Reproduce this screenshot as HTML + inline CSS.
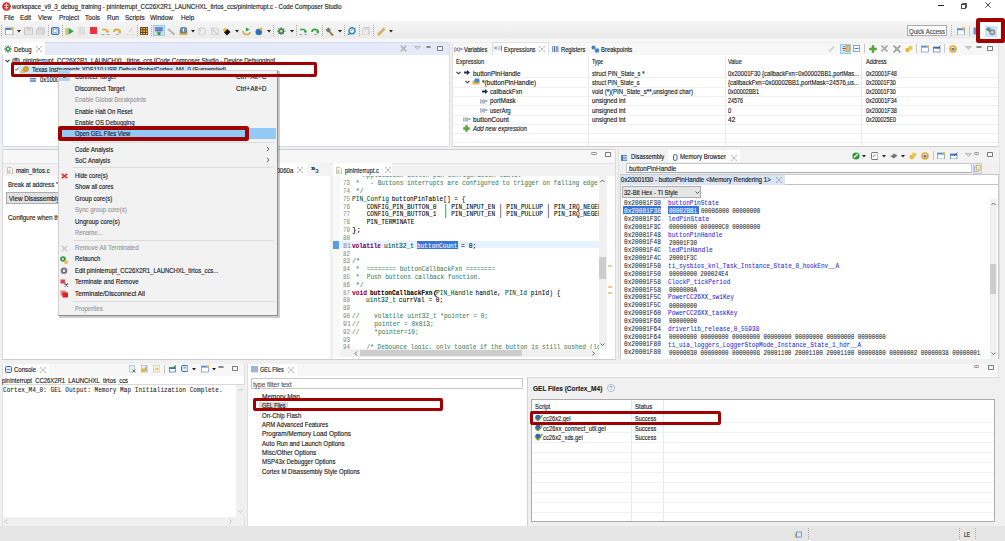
<!DOCTYPE html><html><head><meta charset="utf-8"><style>
*{margin:0;padding:0;box-sizing:border-box}
html,body{width:1005px;height:541px;overflow:hidden;background:#f0f0f0;position:relative}
div,svg{position:absolute}
.t{white-space:pre;transform-origin:0 0;-webkit-text-stroke:0.15px currentColor}
.tm{-webkit-text-stroke:0.08px currentColor}
</style></head><body>
<div style="left:0px;top:0px;width:1005px;height:21.3px;background:#fff"></div>
<svg style="position:absolute;left:1.5px;top:1.5px" width="9" height="9" viewBox="0 0 9 9"><circle cx="4.5" cy="4.5" r="4.3" fill="#d42a2a"/><path d="M2.2 3.2h4.6M4.5 1.5v6M2.5 5.8h4" stroke="#fff" stroke-width="0.8"/></svg>
<div class="t" style="left:12.10px;top:2.16px;line-height:9.0px;font-family:'Liberation Sans', sans-serif;font-size:7.5px;font-weight:normal;font-style:normal;color:#222;transform:scaleX(0.8093);">workspace_v9_3_debug_training - pinInterrupt_CC26X2R1_LAUNCHXL_tirtos_ccs/pinInterrupt.c - Code Composer Studio</div>
<div style="left:938px;top:5.2px;width:5.5px;height:0.9px;background:#222"></div>
<svg style="position:absolute;left:960.5px;top:3px" width="6" height="6" viewBox="0 0 6 6"><rect x="0.5" y="1.5" width="4" height="4" fill="none" stroke="#222" stroke-width="0.8"/><path d="M1.5 1.5V0.5H5.5V4.5H4.5" fill="none" stroke="#222" stroke-width="0.8"/></svg>
<svg style="position:absolute;left:985px;top:2.2px" width="6" height="6" viewBox="0 0 6 6"><path d="M0.3 0.3L5.7 5.7M5.7 0.3L0.3 5.7" stroke="#222" stroke-width="0.8"/></svg>
<div class="t" style="left:4.20px;top:12.90px;line-height:9.0px;font-family:'Liberation Sans', sans-serif;font-size:7.5px;font-weight:normal;font-style:normal;color:#1a1a1a;transform:scaleX(0.8600);">File</div>
<div class="t" style="left:20.30px;top:12.90px;line-height:9.0px;font-family:'Liberation Sans', sans-serif;font-size:7.5px;font-weight:normal;font-style:normal;color:#1a1a1a;transform:scaleX(0.8600);">Edit</div>
<div class="t" style="left:38.00px;top:12.90px;line-height:9.0px;font-family:'Liberation Sans', sans-serif;font-size:7.5px;font-weight:normal;font-style:normal;color:#1a1a1a;transform:scaleX(0.8600);">View</div>
<div class="t" style="left:58.50px;top:12.90px;line-height:9.0px;font-family:'Liberation Sans', sans-serif;font-size:7.5px;font-weight:normal;font-style:normal;color:#1a1a1a;transform:scaleX(0.8600);">Project</div>
<div class="t" style="left:85.20px;top:12.90px;line-height:9.0px;font-family:'Liberation Sans', sans-serif;font-size:7.5px;font-weight:normal;font-style:normal;color:#1a1a1a;transform:scaleX(0.8600);">Tools</div>
<div class="t" style="left:107.00px;top:12.90px;line-height:9.0px;font-family:'Liberation Sans', sans-serif;font-size:7.5px;font-weight:normal;font-style:normal;color:#1a1a1a;transform:scaleX(0.8600);">Run</div>
<div class="t" style="left:125.00px;top:12.90px;line-height:9.0px;font-family:'Liberation Sans', sans-serif;font-size:7.5px;font-weight:normal;font-style:normal;color:#1a1a1a;transform:scaleX(0.8600);">Scripts</div>
<div class="t" style="left:150.40px;top:12.90px;line-height:9.0px;font-family:'Liberation Sans', sans-serif;font-size:7.5px;font-weight:normal;font-style:normal;color:#1a1a1a;transform:scaleX(0.8600);">Window</div>
<div class="t" style="left:180.70px;top:12.90px;line-height:9.0px;font-family:'Liberation Sans', sans-serif;font-size:7.5px;font-weight:normal;font-style:normal;color:#1a1a1a;transform:scaleX(0.8600);">Help</div>
<div style="left:0px;top:21.3px;width:1005px;height:17.2px;background:linear-gradient(#f5f5f5,#ebebeb)"></div>
<div style="left:0px;top:38.5px;width:1005px;height:3px;background:#f7f7f7"></div>
<div style="left:907px;top:25px;width:40px;height:11px;background:#fff;border:1px solid #adadad"></div>
<div class="t" style="left:909.00px;top:26.70px;line-height:9.0px;font-family:'Liberation Sans', sans-serif;font-size:7.5px;font-weight:normal;font-style:normal;color:#444;transform:scaleX(0.8000);">Quick Access</div>
<div style="left:1.5px;top:41.5px;width:448px;height:105.5px;background:#fff;border:1px solid #d3dcef;border-radius:3px 3px 2px 2px"></div>
<div style="left:2.5px;top:42.5px;width:446px;height:12.5px;background:#e4eaf8"></div>
<div style="left:1.5px;top:41.5px;width:43.5px;height:13.5px;background:#fff;border-radius:2px 2px 0 0"></div>
<div class="t" style="left:13.90px;top:44.50px;line-height:9.0px;font-family:'Liberation Sans', sans-serif;font-size:7.5px;font-weight:normal;font-style:normal;color:#1a1a1a;transform:scaleX(0.7911);">Debug</div>
<svg style="position:absolute;left:36px;top:45.5px" width="6" height="6" viewBox="0 0 6 6"><path d="M1.5 1.5L4.5 4.5M4.5 1.5L1.5 4.5" stroke="#9a9a9a" stroke-width="0.7"/><path d="M0.3 1.5V0.3H1.5M4.5 0.3H5.7V1.5M5.7 4.5V5.7H4.5M1.5 5.7H0.3V4.5" fill="none" stroke="#9a9a9a" stroke-width="0.7"/></svg>
<div style="left:425.5px;top:45.8px;width:5.6px;height:2.4px;border:0.8px solid #8a8a8a;border-radius:1.2px;background:#fff"></div>
<div style="left:437.3px;top:45.5px;width:5.8px;height:5.2px;border:0.8px solid #7a7a7a;border-top:1.4px solid #7a7a7a;border-radius:0.8px;background:#fff"></div>
<svg style="position:absolute;left:414px;top:46px" width="7" height="4" viewBox="0 0 7 4"><path d="M0.5 0.5H6.5L3.5 3.3Z" fill="#d8d8d8" stroke="#a0a0a0" stroke-width="0.6"/></svg>
<svg style="left:399.5px;top:44.5px" width="7" height="7" viewBox="0 0 7 7"><path d="M0.8 0.8L6.2 6.2M6.2 0.8L0.8 6.2" stroke="#a8a8a8" stroke-width="1.4"/><circle cx="3.5" cy="3.5" r="1.6" fill="#b8b8b8"/></svg>
<div style="left:451.5px;top:41.5px;width:547.5px;height:105.0px;background:#fff;border:1px solid;border-color:#f0f0f0 #e0e0e0 #cdcdcd #e0e0e0;border-radius:2px 2px 0 0"></div>
<div style="left:452.5px;top:42.5px;width:545.5px;height:12.5px;background:#f7f7f7"></div>
<div style="left:492px;top:41.5px;width:56.5px;height:13.5px;background:#fff;border:1px solid #e0e0e0;border-bottom:none"></div>
<div class="t" style="left:464.00px;top:44.50px;line-height:9.0px;font-family:'Liberation Sans', sans-serif;font-size:7.5px;font-weight:normal;font-style:normal;color:#1a1a1a;transform:scaleX(0.7613);">Variables</div>
<div class="t" style="left:503.70px;top:44.50px;line-height:9.0px;font-family:'Liberation Sans', sans-serif;font-size:7.5px;font-weight:normal;font-style:normal;color:#1a1a1a;transform:scaleX(0.7708);">Expressions</div>
<svg style="position:absolute;left:539px;top:45.5px" width="6" height="6" viewBox="0 0 6 6"><path d="M1.5 1.5L4.5 4.5M4.5 1.5L1.5 4.5" stroke="#9a9a9a" stroke-width="0.7"/><path d="M0.3 1.5V0.3H1.5M4.5 0.3H5.7V1.5M5.7 4.5V5.7H4.5M1.5 5.7H0.3V4.5" fill="none" stroke="#9a9a9a" stroke-width="0.7"/></svg>
<div class="t" style="left:561.00px;top:44.50px;line-height:9.0px;font-family:'Liberation Sans', sans-serif;font-size:7.5px;font-weight:normal;font-style:normal;color:#1a1a1a;transform:scaleX(0.7689);">Registers</div>
<div class="t" style="left:601.20px;top:44.50px;line-height:9.0px;font-family:'Liberation Sans', sans-serif;font-size:7.5px;font-weight:normal;font-style:normal;color:#1a1a1a;transform:scaleX(0.7900);">Breakpoints</div>
<div style="left:976px;top:45.8px;width:5.6px;height:2.4px;border:0.8px solid #8a8a8a;border-radius:1.2px;background:#fff"></div>
<div style="left:987.3px;top:45.5px;width:5.8px;height:5.2px;border:0.8px solid #7a7a7a;border-top:1.4px solid #7a7a7a;border-radius:0.8px;background:#fff"></div>
<svg style="position:absolute;left:965px;top:46px" width="7" height="4" viewBox="0 0 7 4"><path d="M0.5 0.5H6.5L3.5 3.3Z" fill="#d8d8d8" stroke="#a0a0a0" stroke-width="0.6"/></svg>
<div class="t" style="left:454.00px;top:45.99px;line-height:6.6px;font-family:'Liberation Sans', sans-serif;font-size:5.5px;font-weight:normal;font-style:normal;color:#3a5a8a;transform:scaleX(0.9031);">(x)=</div>
<svg style="left:494px;top:45px" width="9" height="7" viewBox="0 0 9 7"><path d="M0.5 1.5L3 4.5M3 1.5L0.5 4.5" stroke="#4a6a9a" stroke-width="0.8"/><path d="M4 2H6.5M4 4H6.5" stroke="#4a6a9a" stroke-width="0.7"/><path d="M7.5 0.5V6.5" stroke="#2a9a3a" stroke-width="0.8"/></svg>
<svg style="left:551.5px;top:45.5px" width="7" height="6" viewBox="0 0 7 6"><path d="M0.8 0V6M2.5 0V6M4.2 0V6M5.9 0V6" stroke="#4a6a9a" stroke-width="0.9"/></svg>
<svg style="left:591.3px;top:44.8px" width="8.5" height="8" viewBox="0 0 8.5 8"><circle cx="2.5" cy="2.5" r="2" fill="#4a7ab8"/><circle cx="6" cy="5.5" r="2.3" fill="#3a8ac8"/></svg>
<div style="left:1px;top:25px;width:1px;height:11px;background:repeating-linear-gradient(to bottom,#b0a890 0 1px,transparent 1px 2px)"></div>
<svg style="left:5px;top:26.5px" width="9" height="8.5" viewBox="0 0 9 8.5"><rect x="0.5" y="1" width="7.5" height="7" fill="#fff8e0" stroke="#6a8fb8" stroke-width="0.7"/><rect x="0.5" y="1" width="7.5" height="2" fill="#4a86c8"/><circle cx="7.5" cy="1.5" r="1.5" fill="#e8b830"/></svg>
<svg style="left:17px;top:29.5px" width="4" height="3" viewBox="0 0 4 3"><path d="M0 0H4L2 2.5Z" fill="#222"/></svg>
<svg style="left:24px;top:26.5px" width="9" height="8.5" viewBox="0 0 9 8.5"><rect x="0.5" y="0.5" width="8" height="7.5" rx="1" fill="#e4e4e4" stroke="#bdbdbd" stroke-width="0.8"/><rect x="2.5" y="0.5" width="4" height="3" fill="#cfcfcf"/></svg>
<svg style="left:36px;top:26.5px" width="9" height="8.5" viewBox="0 0 9 8.5"><rect x="2" y="0.5" width="6.5" height="6.5" rx="1" fill="#e4e4e4" stroke="#c4c4c4" stroke-width="0.7"/><rect x="0.5" y="2" width="6.5" height="6.5" rx="1" fill="#dcdcdc" stroke="#bdbdbd" stroke-width="0.7"/></svg>
<div style="left:47.6px;top:25px;width:1px;height:11px;background:repeating-linear-gradient(to bottom,#b0a890 0 1px,transparent 1px 2px)"></div>
<svg style="left:51px;top:26.5px" width="8.5" height="8.5" viewBox="0 0 8.5 8.5"><rect x="0.6" y="0.6" width="7.3" height="6.8" rx="1.5" fill="#dfe9f7" stroke="#3a6fb8" stroke-width="1.2"/><rect x="2.5" y="2.3" width="3.5" height="3" fill="#fff" stroke="#5d85c0" stroke-width="0.5"/></svg>
<div style="left:61.8px;top:25px;width:1px;height:11px;background:repeating-linear-gradient(to bottom,#b0a890 0 1px,transparent 1px 2px)"></div>
<svg style="left:65px;top:26.5px" width="9" height="8.5" viewBox="0 0 9 8.5"><rect x="0.3" y="1" width="2.8" height="7" fill="#e0c060"/><path d="M3.5 0.8L8.8 4.3L3.5 7.8Z" fill="#3aa34a"/></svg>
<svg style="left:78px;top:26.5px" width="7" height="8" viewBox="0 0 7 8"><rect x="0.5" y="0.5" width="2.5" height="7" fill="#e3e3e3" stroke="#cfcfcf" stroke-width="0.5"/><rect x="4" y="0.5" width="2.5" height="7" fill="#e3e3e3" stroke="#cfcfcf" stroke-width="0.5"/></svg>
<svg style="left:90px;top:27.0px" width="7" height="7" viewBox="0 0 7 7"><rect x="0" y="0" width="7" height="7" fill="#e8323c"/></svg>
<svg style="left:101px;top:26.5px" width="9" height="8.5" viewBox="0 0 9 8.5"><path d="M1 2.5H5L7 5" fill="none" stroke="#d4a838" stroke-width="1.6"/><circle cx="6.5" cy="4.5" r="1.3" fill="#d4a838"/><path d="M0.5 8H3.5M5.5 8H8.5" stroke="#4060a0" stroke-width="1"/></svg>
<svg style="left:113px;top:26.5px" width="9" height="8.5" viewBox="0 0 9 8.5"><path d="M1 5C1 1.5 7 1.5 7 5" fill="none" stroke="#d4a838" stroke-width="1.7"/><circle cx="6.8" cy="5" r="1.4" fill="#d4a838"/><path d="M3 8H6" stroke="#4060a0" stroke-width="1"/></svg>
<svg style="left:125.7px;top:26.5px" width="8" height="8.5" viewBox="0 0 8 8.5"><path d="M6 1L3.5 5" stroke="#cfcfcf" stroke-width="1.3"/><path d="M0.5 8H2.5M5 8H7.5" stroke="#bcbcbc" stroke-width="1"/></svg>
<div style="left:136.6px;top:25px;width:1px;height:11px;background:repeating-linear-gradient(to bottom,#b0a890 0 1px,transparent 1px 2px)"></div>
<svg style="left:140px;top:26.5px" width="8" height="8" viewBox="0 0 8 8"><rect x="0" y="0" width="8" height="8" fill="#5a3a10"/><rect x="0.8" y="0.8" width="1.6" height="1.6" fill="#f0c060"/><rect x="0.8" y="3.3" width="1.6" height="1.6" fill="#f0c060"/><rect x="0.8" y="5.8" width="1.6" height="1.6" fill="#f0c060"/><rect x="3.3" y="0.8" width="1.6" height="1.6" fill="#f0c060"/><rect x="3.3" y="3.3" width="1.6" height="1.6" fill="#f0c060"/><rect x="3.3" y="5.8" width="1.6" height="1.6" fill="#f0c060"/><rect x="5.8" y="0.8" width="1.6" height="1.6" fill="#f0c060"/><rect x="5.8" y="3.3" width="1.6" height="1.6" fill="#f0c060"/><rect x="5.8" y="5.8" width="1.6" height="1.6" fill="#f0c060"/></svg>
<div style="left:151px;top:25px;width:1px;height:11px;background:repeating-linear-gradient(to bottom,#b0a890 0 1px,transparent 1px 2px)"></div>
<div style="left:153px;top:24.8px;width:11.5px;height:11px;background:#cce4f7;border:1px solid #99c9ef"></div>
<svg style="left:155px;top:26.5px" width="8" height="8.5" viewBox="0 0 8 8.5"><rect x="0.5" y="0.5" width="7" height="3.5" fill="#5d8ed8" stroke="#36a" stroke-width="0.4"/><rect x="1" y="4.5" width="6" height="1" fill="#d77"/><circle cx="4" cy="6.5" r="1.6" fill="#2a9a3a"/></svg>
<svg style="left:166.7px;top:26.5px" width="8.5" height="8.5" viewBox="0 0 8.5 8.5"><path d="M1 2L7.5 7.5" stroke="#b8b8b8" stroke-width="2.2"/></svg>
<svg style="left:178.8px;top:26.5px" width="9" height="8.5" viewBox="0 0 9 8.5"><path d="M0.5 3H8.5V8.5H0.5Z" fill="#e0b040"/><rect x="1.5" y="0.5" width="6" height="5.5" rx="1" fill="#6a90c8" stroke="#345" stroke-width="0.4"/><rect x="4" y="1.5" width="1" height="3" fill="#fff"/></svg>
<svg style="left:191px;top:29.5px" width="4" height="3" viewBox="0 0 4 3"><path d="M0 0H4L2 2.5Z" fill="#222"/></svg>
<svg style="left:197.4px;top:26.5px" width="9" height="8.5" viewBox="0 0 9 8.5"><circle cx="5" cy="4.5" r="3.5" fill="none" stroke="#d0d0d0" stroke-width="1.2"/><path d="M1 1L4 4" stroke="#ccc" stroke-width="1.2"/></svg>
<svg style="left:210.4px;top:26.5px" width="9" height="8.5" viewBox="0 0 9 8.5"><circle cx="5" cy="4.5" r="3.5" fill="none" stroke="#d0d0d0" stroke-width="1.2"/><path d="M1 1L8 8" stroke="#ccc" stroke-width="1.2"/></svg>
<svg style="left:222px;top:26.5px" width="9" height="9" viewBox="0 0 9 9"><path d="M0.5 3L3 0.5L5 2.5L2.5 5Z" fill="#e8b830"/><path d="M2 5.5L5.5 2L8.5 5L5 8.5Z" fill="#111"/></svg>
<svg style="left:235px;top:29.5px" width="4" height="3" viewBox="0 0 4 3"><path d="M0 0H4L2 2.5Z" fill="#222"/></svg>
<svg style="left:242px;top:26.5px" width="9" height="9" viewBox="0 0 9 9"><path d="M1 4C1 8.5 8 8.5 8 5" fill="none" stroke="#d8a838" stroke-width="1.6"/><path d="M4 0.5L7.5 2.5L4 4.5Z" fill="#2a9a3a"/></svg>
<svg style="left:254.7px;top:26.5px" width="8" height="8.5" viewBox="0 0 8 8.5"><circle cx="3.8" cy="5" r="3.3" fill="#2f72c0"/><circle cx="6" cy="2" r="1.5" fill="#e8b830"/></svg>
<svg style="left:267px;top:29.5px" width="4" height="3" viewBox="0 0 4 3"><path d="M0 0H4L2 2.5Z" fill="#222"/></svg>
<div style="left:273.3px;top:25px;width:1px;height:11px;background:repeating-linear-gradient(to bottom,#b0a890 0 1px,transparent 1px 2px)"></div>
<svg style="left:277px;top:26.5px" width="8.5" height="8.5" viewBox="0 0 8.5 8.5"><circle cx="4.2" cy="4.2" r="3" fill="#3a7a6a"/><path d="M4.2 0V8.5M0 4.2H8.5M1.2 1.2L7.2 7.2M7.2 1.2L1.2 7.2" stroke="#3a7a6a" stroke-width="0.8"/><circle cx="4.2" cy="4.2" r="1.4" fill="#c8e070"/></svg>
<svg style="left:289.5px;top:29.5px" width="4" height="3" viewBox="0 0 4 3"><path d="M0 0H4L2 2.5Z" fill="#222"/></svg>
<div style="left:295.7px;top:25px;width:1px;height:11px;background:repeating-linear-gradient(to bottom,#b0a890 0 1px,transparent 1px 2px)"></div>
<svg style="left:299px;top:26.5px" width="8.5" height="8.5" viewBox="0 0 8.5 8.5"><path d="M1 2.5H5L7 5" fill="none" stroke="#3aa34a" stroke-width="1.6"/><circle cx="6.5" cy="4.5" r="1.3" fill="#3aa34a"/><path d="M0.5 8H3M5.5 8H8" stroke="#4060a0" stroke-width="1"/></svg>
<svg style="left:311px;top:26.5px" width="8.5" height="8.5" viewBox="0 0 8.5 8.5"><path d="M1 5C1 1.5 7 1.5 7 5" fill="none" stroke="#3aa34a" stroke-width="1.7"/><circle cx="6.8" cy="5" r="1.4" fill="#3aa34a"/><path d="M3 8H6" stroke="#4060a0" stroke-width="1"/></svg>
<div style="left:321.9px;top:25px;width:1px;height:11px;background:repeating-linear-gradient(to bottom,#b0a890 0 1px,transparent 1px 2px)"></div>
<svg style="left:325px;top:26.5px" width="9" height="9" viewBox="0 0 9 9"><path d="M4 4L8 8.5" stroke="#a06a30" stroke-width="1.8"/><path d="M0.5 3L3.5 0.5L6 3L3 5.5Z" fill="#777"/></svg>
<svg style="left:337.5px;top:29.5px" width="4" height="3" viewBox="0 0 4 3"><path d="M0 0H4L2 2.5Z" fill="#222"/></svg>
<div style="left:343.8px;top:25px;width:1px;height:11px;background:repeating-linear-gradient(to bottom,#b0a890 0 1px,transparent 1px 2px)"></div>
<svg style="left:347px;top:26.5px" width="8.5" height="8.5" viewBox="0 0 8.5 8.5"><circle cx="5" cy="3.8" r="3" fill="none" stroke="#2a8ab8" stroke-width="1.4"/><path d="M3 6L0.8 8.2" stroke="#2a8ab8" stroke-width="1.5"/><path d="M3.8 3.8L5.5 2.5" stroke="#2a8ab8" stroke-width="0.9"/></svg>
<div style="left:358.5px;top:25px;width:1px;height:11px;background:repeating-linear-gradient(to bottom,#b0a890 0 1px,transparent 1px 2px)"></div>
<svg style="left:361.8px;top:26.5px" width="8.5" height="8.5" viewBox="0 0 8.5 8.5"><rect x="1.5" y="0.5" width="6.5" height="6.5" rx="1" fill="#e6e6e6" stroke="#c0c0c0" stroke-width="0.7"/><rect x="0.5" y="2" width="6" height="6" rx="1" fill="#ececec" stroke="#c8c8c8" stroke-width="0.7"/></svg>
<div style="left:373.3px;top:25px;width:1px;height:11px;background:repeating-linear-gradient(to bottom,#b0a890 0 1px,transparent 1px 2px)"></div>
<svg style="left:376.6px;top:26.5px" width="9" height="9" viewBox="0 0 9 9"><path d="M1 8L7.5 1.5" stroke="#e8b040" stroke-width="2.8"/><path d="M2.5 6.5L6 3" stroke="#b0b0c8" stroke-width="1.3"/></svg>
<svg style="left:389px;top:29.5px" width="4" height="3" viewBox="0 0 4 3"><path d="M0 0H4L2 2.5Z" fill="#222"/></svg>
<div style="left:950.5px;top:25px;width:1px;height:12px;background:repeating-linear-gradient(to bottom,#b0a890 0 1px,transparent 1px 2px)"></div>
<svg style="left:957px;top:26.5px" width="8" height="8.5" viewBox="0 0 8 8.5"><rect x="0.5" y="1.5" width="7" height="6.5" fill="#fff" stroke="#6a90c0" stroke-width="0.7"/><rect x="0.5" y="1.5" width="7" height="1.8" fill="#5d8ed8"/><circle cx="6.5" cy="1.5" r="1.4" fill="#e8b830"/></svg>
<div style="left:969px;top:26px;width:1px;height:10px;background:#c8c8c8"></div>
<svg style="left:973px;top:26.5px" width="8" height="8.5" viewBox="0 0 8 8.5"><rect x="0.5" y="0.5" width="7" height="7" rx="1" fill="#5d8ed8"/><circle cx="5" cy="5" r="2.6" fill="#999"/></svg>
<div style="left:980px;top:22.5px;width:20px;height:16.5px;background:#fff"></div>
<div style="left:984.5px;top:25.5px;width:12.5px;height:11px;background:#cce4f7"></div>
<svg style="left:986px;top:27.0px" width="10" height="9" viewBox="0 0 10 9"><path d="M0.5 1.5L4.5 4.5" stroke="#2a9a3a" stroke-width="2"/><rect x="1" y="0.5" width="3.5" height="2.5" fill="#5d8ed8"/><circle cx="6.3" cy="5.3" r="3" fill="#8a8a8a"/><circle cx="6.3" cy="5.3" r="1.5" fill="#d0d0d0"/></svg>
<svg style="left:3.9px;top:44.8px" width="8" height="8" viewBox="0 0 8 8"><circle cx="4" cy="4" r="2.6" fill="#3a8a5a"/><path d="M4 0V8M0 4H8M1.2 1.2L6.8 6.8M6.8 1.2L1.2 6.8" stroke="#3a8a5a" stroke-width="0.9"/><circle cx="4" cy="4" r="1.2" fill="#d8f0a0"/></svg>
<svg style="left:5.3px;top:59px" width="5" height="4" viewBox="0 0 5 4"><path d="M0.5 0.8L2.5 2.8L4.5 0.8" fill="none" stroke="#333" stroke-width="1.1"/></svg>
<svg style="left:12px;top:57px" width="8" height="7" viewBox="0 0 8 7"><rect x="0.5" y="1.5" width="7" height="5" rx="1.5" fill="#aaa" stroke="#666" stroke-width="0.6"/><circle cx="4" cy="2" r="1.6" fill="#666"/></svg>
<div class="t" style="left:23.00px;top:55.50px;line-height:9.0px;font-family:'Liberation Sans', sans-serif;font-size:7.5px;font-weight:normal;font-style:normal;color:#1a1a1a;transform:scaleX(0.8077);">pinInterrupt_CC26X2R1_LAUNCHXL_tirtos_ccs [Code Composer Studio - Device Debugging]</div>
<div style="left:19.3px;top:65.5px;width:207px;height:8px;background:#cde8ff"></div>
<svg style="left:15px;top:67px" width="4" height="4" viewBox="0 0 4 4"><path d="M0.3 2L1.5 3.3L3.5 0.5" fill="none" stroke="#333" stroke-width="0.8"/></svg>
<svg style="left:21px;top:66px" width="8" height="7" viewBox="0 0 8 7"><rect x="0" y="3" width="4" height="4" fill="#e8c048"/><circle cx="5" cy="3" r="2.6" fill="#e0a030" stroke="#a87018" stroke-width="0.5"/></svg>
<div class="t" style="left:31.60px;top:65.10px;line-height:9.0px;font-family:'Liberation Sans', sans-serif;font-size:7.5px;font-weight:normal;font-style:normal;color:#1a1a1a;transform:scaleX(0.7886);">Texas Instruments XDS110 USB Debug Probe/Cortex_M4_0 (Suspended)</div>
<svg style="left:30px;top:77.6px" width="6" height="4.5" viewBox="0 0 6 4.5"><path d="M0 0.6H6M0 2.2H6M0 3.8H6" stroke="#3a6fc0" stroke-width="1"/></svg>
<div class="t" style="left:40.00px;top:74.80px;line-height:9.0px;font-family:'Liberation Sans', sans-serif;font-size:7.5px;font-weight:normal;font-style:normal;color:#1a1a1a;transform:scaleX(0.7812);">0x1000060a  (no symbols are defined)</div>
<div style="left:588.2px;top:56px;width:1px;height:90px;background:#e8e8e8"></div>
<div style="left:725.2px;top:56px;width:1px;height:90px;background:#e8e8e8"></div>
<div style="left:861.2px;top:56px;width:1px;height:90px;background:#e8e8e8"></div>
<div class="t" style="left:455.90px;top:57.30px;line-height:9.0px;font-family:'Liberation Sans', sans-serif;font-size:7.5px;font-weight:normal;font-style:normal;color:#1a1a1a;transform:scaleX(0.7568);">Expression</div>
<div class="t" style="left:592.20px;top:57.30px;line-height:9.0px;font-family:'Liberation Sans', sans-serif;font-size:7.5px;font-weight:normal;font-style:normal;color:#1a1a1a;transform:scaleX(0.6888);">Type</div>
<div class="t" style="left:728.30px;top:57.30px;line-height:9.0px;font-family:'Liberation Sans', sans-serif;font-size:7.5px;font-weight:normal;font-style:normal;color:#1a1a1a;transform:scaleX(0.7379);">Value</div>
<div class="t" style="left:865.50px;top:57.30px;line-height:9.0px;font-family:'Liberation Sans', sans-serif;font-size:7.5px;font-weight:normal;font-style:normal;color:#1a1a1a;transform:scaleX(0.7504);">Address</div>
<div style="left:452.5px;top:77.4px;width:545.5px;height:0.8px;background:#f0f0f0"></div>
<div style="left:452.5px;top:86.7px;width:545.5px;height:0.8px;background:#f0f0f0"></div>
<div style="left:452.5px;top:96px;width:545.5px;height:0.8px;background:#f0f0f0"></div>
<div style="left:452.5px;top:105.3px;width:545.5px;height:0.8px;background:#f0f0f0"></div>
<div style="left:452.5px;top:114.5px;width:545.5px;height:0.8px;background:#f0f0f0"></div>
<div style="left:452.5px;top:123.8px;width:545.5px;height:0.8px;background:#f0f0f0"></div>
<div style="left:452.5px;top:133.1px;width:545.5px;height:0.8px;background:#f0f0f0"></div>
<div style="left:452.5px;top:142.3px;width:545.5px;height:0.8px;background:#f0f0f0"></div>
<svg style="left:456.3px;top:71px" width="5" height="4" viewBox="0 0 5 4"><path d="M0.5 0.8L2.5 2.8L4.5 0.8" fill="none" stroke="#333" stroke-width="1.1"/></svg>
<svg style="left:464px;top:70px" width="6" height="5" viewBox="0 0 6 5"><path d="M0 1.5H3V0L6 2.5L3 5V3.5H0Z" fill="#1a2a6a"/></svg>
<div class="t" style="left:473.30px;top:68.50px;line-height:9.0px;font-family:'Liberation Sans', sans-serif;font-size:7.5px;font-weight:normal;font-style:normal;color:#1a1a1a;transform:scaleX(0.8582);">buttonPinHandle</div>
<svg style="left:464.6px;top:80.2px" width="5" height="4" viewBox="0 0 5 4"><path d="M0.5 0.8L2.5 2.8L4.5 0.8" fill="none" stroke="#333" stroke-width="1.1"/></svg>
<svg style="left:471.5px;top:78px" width="9" height="7" viewBox="0 0 9 7"><path d="M0.5 2.5H7.5V6.5H0.5Z" fill="#e8b040"/><rect x="2.5" y="0.5" width="5" height="4" rx="1.2" fill="#4a8ad0"/></svg>
<div class="t" style="left:481.70px;top:77.80px;line-height:9.0px;font-family:'Liberation Sans', sans-serif;font-size:7.5px;font-weight:normal;font-style:normal;color:#1a1a1a;transform:scaleX(0.8532);">*(buttonPinHandle)</div>
<svg style="left:482px;top:89px" width="6" height="5" viewBox="0 0 6 5"><path d="M0 1.5H3V0L6 2.5L3 5V3.5H0Z" fill="#1a2a6a"/></svg>
<div class="t" style="left:490.10px;top:87.10px;line-height:9.0px;font-family:'Liberation Sans', sans-serif;font-size:7.5px;font-weight:normal;font-style:normal;color:#1a1a1a;transform:scaleX(0.8104);">callbackFxn</div>
<div class="t" style="left:479.50px;top:97.79px;line-height:6.6px;font-family:'Liberation Sans', sans-serif;font-size:5.5px;font-weight:normal;font-style:normal;color:#3a5a8a;transform:scaleX(0.7613);">(x)=</div>
<div class="t" style="left:490.10px;top:96.40px;line-height:9.0px;font-family:'Liberation Sans', sans-serif;font-size:7.5px;font-weight:normal;font-style:normal;color:#1a1a1a;transform:scaleX(0.8323);">portMask</div>
<div class="t" style="left:479.50px;top:107.09px;line-height:6.6px;font-family:'Liberation Sans', sans-serif;font-size:5.5px;font-weight:normal;font-style:normal;color:#3a5a8a;transform:scaleX(0.7613);">(x)=</div>
<div class="t" style="left:490.10px;top:105.70px;line-height:9.0px;font-family:'Liberation Sans', sans-serif;font-size:7.5px;font-weight:normal;font-style:normal;color:#1a1a1a;transform:scaleX(0.7848);">userArg</div>
<div class="t" style="left:463.00px;top:116.29px;line-height:6.6px;font-family:'Liberation Sans', sans-serif;font-size:5.5px;font-weight:normal;font-style:normal;color:#3a5a8a;transform:scaleX(0.7613);">(x)=</div>
<div class="t" style="left:473.30px;top:114.90px;line-height:9.0px;font-family:'Liberation Sans', sans-serif;font-size:7.5px;font-weight:normal;font-style:normal;color:#1a1a1a;transform:scaleX(0.8780);">buttonCount</div>
<svg style="left:463px;top:124.5px" width="7" height="7" viewBox="0 0 7 7"><path d="M2.5 0.5H4.5V2.5H6.5V4.5H4.5V6.5H2.5V4.5H0.5V2.5H2.5Z" fill="#5aaa30" stroke="#3a8a20" stroke-width="0.4"/></svg>
<div class="t" style="left:473.30px;top:124.20px;line-height:9.0px;font-family:'Liberation Sans', sans-serif;font-size:7.5px;font-weight:normal;font-style:italic;color:#1a1a1a;transform:scaleX(0.7971);">Add new expression</div>
<div class="t" style="left:591.80px;top:68.50px;line-height:9.0px;font-family:'Liberation Sans', sans-serif;font-size:7.5px;font-weight:normal;font-style:normal;color:#1a1a1a;transform:scaleX(0.7762);">struct PIN_State_s *</div>
<div class="t" style="left:591.80px;top:77.80px;line-height:9.0px;font-family:'Liberation Sans', sans-serif;font-size:7.5px;font-weight:normal;font-style:normal;color:#1a1a1a;transform:scaleX(0.7619);">struct PIN_State_s</div>
<div class="t" style="left:591.80px;top:87.10px;line-height:9.0px;font-family:'Liberation Sans', sans-serif;font-size:7.5px;font-weight:normal;font-style:normal;color:#1a1a1a;transform:scaleX(0.8016);">void (*)(PIN_State_s**,unsigned char)</div>
<div class="t" style="left:591.80px;top:96.40px;line-height:9.0px;font-family:'Liberation Sans', sans-serif;font-size:7.5px;font-weight:normal;font-style:normal;color:#1a1a1a;transform:scaleX(0.8293);">unsigned int</div>
<div class="t" style="left:591.80px;top:105.70px;line-height:9.0px;font-family:'Liberation Sans', sans-serif;font-size:7.5px;font-weight:normal;font-style:normal;color:#1a1a1a;transform:scaleX(0.8293);">unsigned int</div>
<div class="t" style="left:591.80px;top:114.90px;line-height:9.0px;font-family:'Liberation Sans', sans-serif;font-size:7.5px;font-weight:normal;font-style:normal;color:#1a1a1a;transform:scaleX(0.8293);">unsigned int</div>
<div class="t" style="left:728.30px;top:68.50px;line-height:9.0px;font-family:'Liberation Sans', sans-serif;font-size:7.5px;font-weight:normal;font-style:normal;color:#1a1a1a;transform:scaleX(0.7774);">0x20001F30 {callbackFxn=0x00002BB1,portMas...</div>
<div class="t" style="left:728.30px;top:77.80px;line-height:9.0px;font-family:'Liberation Sans', sans-serif;font-size:7.5px;font-weight:normal;font-style:normal;color:#1a1a1a;transform:scaleX(0.7988);">{callbackFxn=0x00002BB1,portMask=24576,us...</div>
<div class="t" style="left:728.30px;top:87.10px;line-height:9.0px;font-family:'Liberation Sans', sans-serif;font-size:7.5px;font-weight:normal;font-style:normal;color:#1a1a1a;transform:scaleX(0.7209);">0x00002BB1</div>
<div class="t" style="left:728.30px;top:96.40px;line-height:9.0px;font-family:'Liberation Sans', sans-serif;font-size:7.5px;font-weight:normal;font-style:normal;color:#1a1a1a;transform:scaleX(0.7143);">24576</div>
<div class="t" style="left:728.30px;top:105.70px;line-height:9.0px;font-family:'Liberation Sans', sans-serif;font-size:7.5px;font-weight:normal;font-style:normal;color:#1a1a1a;transform:scaleX(0.7656);">0</div>
<div class="t" style="left:728.30px;top:114.90px;line-height:9.0px;font-family:'Liberation Sans', sans-serif;font-size:7.5px;font-weight:normal;font-style:normal;color:#1a1a1a;transform:scaleX(0.8750);">42</div>
<div class="t" style="left:865.50px;top:68.50px;line-height:9.0px;font-family:'Liberation Sans', sans-serif;font-size:7.5px;font-weight:normal;font-style:normal;color:#1a1a1a;transform:scaleX(0.7383);">0x20001F48</div>
<div class="t" style="left:865.50px;top:77.80px;line-height:9.0px;font-family:'Liberation Sans', sans-serif;font-size:7.5px;font-weight:normal;font-style:normal;color:#1a1a1a;transform:scaleX(0.7145);">0x20001F30</div>
<div class="t" style="left:865.50px;top:87.10px;line-height:9.0px;font-family:'Liberation Sans', sans-serif;font-size:7.5px;font-weight:normal;font-style:normal;color:#1a1a1a;transform:scaleX(0.7145);">0x20001F30</div>
<div class="t" style="left:865.50px;top:96.40px;line-height:9.0px;font-family:'Liberation Sans', sans-serif;font-size:7.5px;font-weight:normal;font-style:normal;color:#1a1a1a;transform:scaleX(0.7383);">0x20001F34</div>
<div class="t" style="left:865.50px;top:105.70px;line-height:9.0px;font-family:'Liberation Sans', sans-serif;font-size:7.5px;font-weight:normal;font-style:normal;color:#1a1a1a;transform:scaleX(0.7383);">0x20001F38</div>
<div class="t" style="left:865.50px;top:114.90px;line-height:9.0px;font-family:'Liberation Sans', sans-serif;font-size:7.5px;font-weight:normal;font-style:normal;color:#1a1a1a;transform:scaleX(0.7145);">0x200025E0</div>
<svg style="left:828px;top:45px" width="7" height="7" viewBox="0 0 7 7"><path d="M1 6.5L6 1.5" stroke="#c8c8c8" stroke-width="1.5"/><rect x="0.5" y="4" width="3" height="3" fill="#ddd"/></svg>
<div style="left:840px;top:43.5px;width:11px;height:10.5px;background:#cce4f7;border:1px solid #99c9ef"></div>
<svg style="left:841.5px;top:45px" width="8" height="7" viewBox="0 0 8 7"><path d="M0.5 3.5H4" stroke="#c04040" stroke-width="1"/><rect x="4" y="0.5" width="3.5" height="6" fill="#f0c060" stroke="#a08030" stroke-width="0.5"/><path d="M1 1.5H3M1 5.5H3" stroke="#4a7ac0" stroke-width="0.8"/></svg>
<svg style="left:853px;top:45px" width="7" height="7" viewBox="0 0 7 7"><rect x="0.5" y="0.5" width="6" height="6" fill="#fff" stroke="#6a90c0" stroke-width="0.8"/><path d="M1.5 3.5H5.5" stroke="#3a6ab0" stroke-width="0.9"/></svg>
<div style="left:863.7px;top:44px;width:1px;height:9px;background:#c8c8c8"></div>
<svg style="left:868.5px;top:45px" width="8" height="8" viewBox="0 0 8 8"><path d="M3 0.5H5V3H7.5V5H5V7.5H3V5H0.5V3H3Z" fill="#5aaa30" stroke="#3a8a20" stroke-width="0.4"/></svg>
<svg style="left:881px;top:45px" width="7" height="7" viewBox="0 0 7 7"><path d="M0.5 0.5L6.5 6.5M6.5 0.5L0.5 6.5" stroke="#a8a8a8" stroke-width="1.6"/></svg>
<svg style="left:892.5px;top:44.5px" width="8" height="8" viewBox="0 0 8 8"><path d="M0.5 0.5L7.5 7.5M7.5 0.5L0.5 7.5" stroke="#8a8a8a" stroke-width="1.4"/><circle cx="4" cy="4" r="2" fill="#aaa"/></svg>
<svg style="left:905px;top:44.5px" width="8" height="8" viewBox="0 0 8 8"><circle cx="2.5" cy="5" r="2.2" fill="#e8b830"/><circle cx="5.5" cy="3" r="2.2" fill="#f0c850"/></svg>
<div style="left:916px;top:44px;width:1px;height:9px;background:#c8c8c8"></div>
<svg style="left:920.5px;top:45px" width="8" height="7.5" viewBox="0 0 8 7.5"><rect x="0.5" y="1" width="7" height="6" fill="#fff" stroke="#6a90c0" stroke-width="0.7"/><rect x="0.5" y="1" width="7" height="1.6" fill="#5d8ed8"/><circle cx="7" cy="1.5" r="1.3" fill="#e8b830"/></svg>
<svg style="left:932.5px;top:45px" width="8" height="7.5" viewBox="0 0 8 7.5"><rect x="0.5" y="2" width="6.5" height="5" fill="#fff" stroke="#4a7ac0" stroke-width="0.7"/><rect x="0.5" y="2" width="6.5" height="1.6" fill="#3a6ab0"/><path d="M4 4L7.5 0.5" stroke="#555" stroke-width="0.8"/></svg>
<div style="left:944px;top:44px;width:1px;height:9px;background:#c8c8c8"></div>
<svg style="left:948.5px;top:44.5px" width="8" height="8" viewBox="0 0 8 8"><circle cx="4" cy="4" r="3" fill="none" stroke="#e0a830" stroke-width="1.6"/><rect x="2.5" y="3" width="3" height="2.5" fill="#777"/></svg>
<div style="left:1.5px;top:148.5px;width:614.5px;height:211px;background:#fff;border:1px solid;border-color:#cfcfcf #dadada #cdcdcd #dadada;border-top-width:1.3px;border-radius:2px 2px 0 0"></div>
<div style="left:2.5px;top:149.8px;width:612.5px;height:13.2px;background:#f7f7f7"></div>
<div style="left:2.5px;top:163px;width:612.5px;height:12.8px;background:#f2f2f2;border-top:0.8px solid #e4e4e4"></div>
<div style="left:591px;top:152.3px;width:5.6px;height:2.4px;border:0.8px solid #8a8a8a;border-radius:1.2px;background:#fff"></div>
<div style="left:605.3px;top:152.0px;width:5.8px;height:5.2px;border:0.8px solid #7a7a7a;border-top:1.4px solid #7a7a7a;border-radius:0.8px;background:#fff"></div>
<svg style="left:6.6px;top:166.5px" width="6" height="7.5" viewBox="0 0 6 7.5"><path d="M0.5 0.5H4L5.5 2V7H0.5Z" fill="#fff" stroke="#b8a060" stroke-width="0.6"/><text x="1.3" y="5.8" font-size="4.5" fill="#3a6ab0" font-family="Liberation Sans">c</text></svg>
<div class="t" style="left:15.80px;top:165.90px;line-height:9.0px;font-family:'Liberation Sans', sans-serif;font-size:7.5px;font-weight:normal;font-style:normal;color:#1a1a1a;transform:scaleX(0.7909);">main_tirtos.c</div>
<div style="left:58px;top:163px;width:248.8px;height:12.8px;background:#fff"></div>
<div class="t" style="left:260.00px;top:165.90px;line-height:9.0px;font-family:'Liberation Sans', sans-serif;font-size:7.5px;font-weight:normal;font-style:normal;color:#1a1a1a;transform:scaleX(0.8051);">0x1000060a</div>
<svg style="position:absolute;left:297px;top:166.5px" width="6" height="6" viewBox="0 0 6 6"><path d="M1.5 1.5L4.5 4.5M4.5 1.5L1.5 4.5" stroke="#9a9a9a" stroke-width="0.7"/><path d="M0.3 1.5V0.3H1.5M4.5 0.3H5.7V1.5M5.7 4.5V5.7H4.5M1.5 5.7H0.3V4.5" fill="none" stroke="#9a9a9a" stroke-width="0.7"/></svg>
<div style="left:306.8px;top:163px;width:22.2px;height:12.8px;background:#f3f3f3"></div>
<div class="t" style="left:311.30px;top:163.80px;line-height:9.0px;font-family:'Liberation Sans', sans-serif;font-size:7.5px;font-weight:bold;font-style:normal;color:#111;transform:scaleX(1.0125);">»</div>
<div class="t" style="left:315.20px;top:168.22px;line-height:7.2px;font-family:'Liberation Sans', sans-serif;font-size:6px;font-weight:normal;font-style:normal;color:#333;">3</div>
<div class="t" style="left:7.80px;top:179.80px;line-height:9.0px;font-family:'Liberation Sans', sans-serif;font-size:7.5px;font-weight:normal;font-style:normal;color:#1a1a1a;transform:scaleX(0.8150);">Break at address &quot;0x1000060a&quot; with no debug information available.</div>
<div style="left:6.3px;top:192.4px;width:120px;height:11.6px;background:#e1e1e1;border:1px solid #adadad"></div>
<div class="t" style="left:9.20px;top:194.30px;line-height:9.0px;font-family:'Liberation Sans', sans-serif;font-size:7.5px;font-weight:normal;font-style:normal;color:#1a1a1a;transform:scaleX(0.8333);">View Disassembly...</div>
<div class="t" style="left:7.80px;top:213.30px;line-height:9.0px;font-family:'Liberation Sans', sans-serif;font-size:7.5px;font-weight:normal;font-style:normal;color:#1a1a1a;transform:scaleX(0.8475);">Configure when this editor is shown</div>
<div style="left:329.5px;top:175.8px;width:3px;height:183px;background:#f0f0f0"></div>
<div style="left:332.7px;top:163px;width:59.5px;height:12.8px;background:#fff"></div>
<svg style="left:336px;top:166.5px" width="6" height="7.5" viewBox="0 0 6 7.5"><path d="M0.5 0.5H4L5.5 2V7H0.5Z" fill="#fff" stroke="#b8a060" stroke-width="0.6"/><text x="1.3" y="5.8" font-size="4.5" fill="#3a6ab0" font-family="Liberation Sans">c</text></svg>
<div class="t" style="left:344.60px;top:165.90px;line-height:9.0px;font-family:'Liberation Sans', sans-serif;font-size:7.5px;font-weight:normal;font-style:normal;color:#1a1a1a;transform:scaleX(0.7729);">pinInterrupt.c</div>
<svg style="position:absolute;left:384.5px;top:166.5px" width="6" height="6" viewBox="0 0 6 6"><path d="M1.5 1.5L4.5 4.5M4.5 1.5L1.5 4.5" stroke="#9a9a9a" stroke-width="0.7"/><path d="M0.3 1.5V0.3H1.5M4.5 0.3H5.7V1.5M5.7 4.5V5.7H4.5M1.5 5.7H0.3V4.5" fill="none" stroke="#9a9a9a" stroke-width="0.7"/></svg>
<div style="left:332.5px;top:175.8px;width:7px;height:181px;background:#f8f8f8"></div>
<div style="left:340px;top:241px;width:258.6px;height:7.2px;background:#e8f2fe"></div>
<div style="left:333px;top:240.5px;width:5.5px;height:8px;background:#5a9ae0"></div>
<div style="left:340px;top:175.8px;width:258.6px;height:173.6px;overflow:hidden">
<div class="t tm" style="left:11.60px;top:-4.48px;line-height:8.395px;font-family:'Liberation Mono', monospace;font-size:6.995833333333333px;font-weight:normal;font-style:normal;color:#3f7f5f;transform:scaleX(0.8785);"> * Application button pin configuration table:</div>
<div class="t tm" style="left:11.60px;top:3.34px;line-height:8.395px;font-family:'Liberation Mono', monospace;font-size:6.995833333333333px;font-weight:normal;font-style:normal;color:#3f7f5f;transform:scaleX(0.8746);"> *   - Buttons interrupts are configured to trigger on falling edge.</div>
<div class="t tm" style="left:11.60px;top:11.16px;line-height:8.395px;font-family:'Liberation Mono', monospace;font-size:6.995833333333333px;font-weight:normal;font-style:normal;color:#3f7f5f;transform:scaleX(0.9223);"> */</div>
<div class="t tm" style="left:11.60px;top:18.98px;line-height:8.395px;font-family:'Liberation Mono', monospace;font-size:6.995833333333333px;font-weight:normal;font-style:normal;color:#005032;transform:scaleX(0.8811);">PIN_Config</div>
<div class="t tm" style="left:48.10px;top:18.98px;line-height:8.395px;font-family:'Liberation Mono', monospace;font-size:6.995833333333333px;font-weight:normal;font-style:normal;color:#000;transform:scaleX(0.8785);"> buttonPinTable[] = {</div>
<div class="t tm" style="left:11.60px;top:26.80px;line-height:8.395px;font-family:'Liberation Mono', monospace;font-size:6.995833333333333px;font-weight:normal;font-style:normal;color:#000;transform:scaleX(0.8760);">    CONFIG_PIN_BUTTON_0  | PIN_INPUT_EN | PIN_PULLUP | PIN_IRQ_NEGEDGE,</div>
<div class="t tm" style="left:11.60px;top:34.62px;line-height:8.395px;font-family:'Liberation Mono', monospace;font-size:6.995833333333333px;font-weight:normal;font-style:normal;color:#000;transform:scaleX(0.8760);">    CONFIG_PIN_BUTTON_1  | PIN_INPUT_EN | PIN_PULLUP | PIN_IRQ_NEGEDGE,</div>
<div class="t tm" style="left:11.60px;top:42.44px;line-height:8.395px;font-family:'Liberation Mono', monospace;font-size:6.995833333333333px;font-weight:normal;font-style:normal;color:#000;transform:scaleX(0.8746);">    PIN_TERMINATE</div>
<div class="t tm" style="left:11.60px;top:50.26px;line-height:8.395px;font-family:'Liberation Mono', monospace;font-size:6.995833333333333px;font-weight:normal;font-style:normal;color:#000;transform:scaleX(1.0876);">};</div>
<div class="t tm" style="left:11.60px;top:65.90px;line-height:8.395px;font-family:'Liberation Mono', monospace;font-size:6.995833333333333px;font-weight:bold;font-style:normal;color:#7f0055;transform:scaleX(0.8647);">volatile</div>
<div class="t tm" style="left:44.45px;top:65.90px;line-height:8.395px;font-family:'Liberation Mono', monospace;font-size:6.995833333333333px;font-weight:normal;font-style:normal;color:#005032;transform:scaleX(0.8910);">uint32_t</div>
<div style="left:77.00000000000001px;top:65.35999999999999px;width:40.75px;height:7.8px;background:#3875d7"></div>
<div class="t tm" style="left:77.30px;top:65.90px;line-height:8.395px;font-family:'Liberation Mono', monospace;font-size:6.995833333333333px;font-weight:normal;font-style:normal;color:#fff;transform:scaleX(0.8761);">buttonCount</div>
<div class="t tm" style="left:117.45px;top:65.90px;line-height:8.395px;font-family:'Liberation Mono', monospace;font-size:6.995833333333333px;font-weight:normal;font-style:normal;color:#000;transform:scaleX(0.9252);"> = 0;</div>
<div class="t tm" style="left:11.60px;top:81.54px;line-height:8.395px;font-family:'Liberation Mono', monospace;font-size:6.995833333333333px;font-weight:normal;font-style:normal;color:#3f7f5f;transform:scaleX(0.9516);">/*</div>
<div class="t tm" style="left:11.60px;top:89.36px;line-height:8.395px;font-family:'Liberation Mono', monospace;font-size:6.995833333333333px;font-weight:normal;font-style:normal;color:#3f7f5f;transform:scaleX(0.8755);"> *  ======== buttonCallbackFxn ========</div>
<div class="t tm" style="left:11.60px;top:97.18px;line-height:8.395px;font-family:'Liberation Mono', monospace;font-size:6.995833333333333px;font-weight:normal;font-style:normal;color:#3f7f5f;transform:scaleX(0.8793);"> *  Push buttons callback function.</div>
<div class="t tm" style="left:11.60px;top:105.00px;line-height:8.395px;font-family:'Liberation Mono', monospace;font-size:6.995833333333333px;font-weight:normal;font-style:normal;color:#3f7f5f;transform:scaleX(0.9223);"> */</div>
<div class="t tm" style="left:11.60px;top:112.82px;line-height:8.395px;font-family:'Liberation Mono', monospace;font-size:6.995833333333333px;font-weight:bold;font-style:normal;color:#7f0055;transform:scaleX(0.8956);">void</div>
<div class="t tm" style="left:29.85px;top:112.82px;line-height:8.395px;font-family:'Liberation Mono', monospace;font-size:6.995833333333333px;font-weight:bold;font-style:normal;color:#000;transform:scaleX(0.8746);">buttonCallbackFxn</div>
<div class="t tm" style="left:91.90px;top:112.82px;line-height:8.395px;font-family:'Liberation Mono', monospace;font-size:6.995833333333333px;font-weight:normal;font-style:normal;color:#000;transform:scaleX(1.6653);">(</div>
<div class="t tm" style="left:95.55px;top:112.82px;line-height:8.395px;font-family:'Liberation Mono', monospace;font-size:6.995833333333333px;font-weight:normal;font-style:normal;color:#005032;transform:scaleX(0.8811);">PIN_Handle</div>
<div class="t tm" style="left:132.05px;top:112.82px;line-height:8.395px;font-family:'Liberation Mono', monospace;font-size:6.995833333333333px;font-weight:normal;font-style:normal;color:#000;transform:scaleX(0.8605);"> handle, </div>
<div class="t tm" style="left:164.90px;top:112.82px;line-height:8.395px;font-family:'Liberation Mono', monospace;font-size:6.995833333333333px;font-weight:normal;font-style:normal;color:#005032;transform:scaleX(0.8720);">PIN_Id</div>
<div class="t tm" style="left:186.80px;top:112.82px;line-height:8.395px;font-family:'Liberation Mono', monospace;font-size:6.995833333333333px;font-weight:normal;font-style:normal;color:#000;transform:scaleX(0.8838);"> pinId) {</div>
<div class="t tm" style="left:26.20px;top:120.64px;line-height:8.395px;font-family:'Liberation Mono', monospace;font-size:6.995833333333333px;font-weight:normal;font-style:normal;color:#005032;transform:scaleX(0.8910);">uint32_t</div>
<div class="t tm" style="left:55.40px;top:120.64px;line-height:8.395px;font-family:'Liberation Mono', monospace;font-size:6.995833333333333px;font-weight:normal;font-style:normal;color:#000;transform:scaleX(0.8850);"> currVal = 0;</div>
<div class="t tm" style="left:11.60px;top:136.28px;line-height:8.395px;font-family:'Liberation Mono', monospace;font-size:6.995833333333333px;font-weight:normal;font-style:normal;color:#3f7f5f;transform:scaleX(0.8773);">//    volatile uint32_t *pointer = 0;</div>
<div class="t tm" style="left:11.60px;top:144.10px;line-height:8.395px;font-family:'Liberation Mono', monospace;font-size:6.995833333333333px;font-weight:normal;font-style:normal;color:#3f7f5f;transform:scaleX(0.8857);">//    pointer = 0x013;</div>
<div class="t tm" style="left:11.60px;top:151.92px;line-height:8.395px;font-family:'Liberation Mono', monospace;font-size:6.995833333333333px;font-weight:normal;font-style:normal;color:#3f7f5f;transform:scaleX(0.8838);">//    *pointer=10;</div>
<div class="t tm" style="left:11.60px;top:167.56px;line-height:8.395px;font-family:'Liberation Mono', monospace;font-size:6.995833333333333px;font-weight:normal;font-style:normal;color:#3f7f5f;transform:scaleX(0.8722);">    /* Debounce logic, only toggle if the button is still pushed (low) */</div>
</div>
<div class="t tm" style="left:343.30px;top:179.14px;line-height:8.395px;font-family:'Liberation Mono', monospace;font-size:6.995833333333333px;font-weight:normal;font-style:normal;color:#8c8c8c;transform:scaleX(0.8327);">73</div>
<div class="t tm" style="left:343.30px;top:186.96px;line-height:8.395px;font-family:'Liberation Mono', monospace;font-size:6.995833333333333px;font-weight:normal;font-style:normal;color:#8c8c8c;transform:scaleX(0.8327);">74</div>
<div class="t tm" style="left:343.30px;top:194.78px;line-height:8.395px;font-family:'Liberation Mono', monospace;font-size:6.995833333333333px;font-weight:normal;font-style:normal;color:#8c8c8c;transform:scaleX(0.8327);">75</div>
<div class="t tm" style="left:343.30px;top:202.60px;line-height:8.395px;font-family:'Liberation Mono', monospace;font-size:6.995833333333333px;font-weight:normal;font-style:normal;color:#8c8c8c;transform:scaleX(0.8327);">76</div>
<div class="t tm" style="left:343.30px;top:210.42px;line-height:8.395px;font-family:'Liberation Mono', monospace;font-size:6.995833333333333px;font-weight:normal;font-style:normal;color:#8c8c8c;transform:scaleX(0.8327);">77</div>
<div class="t tm" style="left:343.30px;top:218.24px;line-height:8.395px;font-family:'Liberation Mono', monospace;font-size:6.995833333333333px;font-weight:normal;font-style:normal;color:#8c8c8c;transform:scaleX(0.8327);">78</div>
<div class="t tm" style="left:343.30px;top:226.06px;line-height:8.395px;font-family:'Liberation Mono', monospace;font-size:6.995833333333333px;font-weight:normal;font-style:normal;color:#8c8c8c;transform:scaleX(0.8327);">79</div>
<div class="t tm" style="left:343.30px;top:233.88px;line-height:8.395px;font-family:'Liberation Mono', monospace;font-size:6.995833333333333px;font-weight:normal;font-style:normal;color:#8c8c8c;transform:scaleX(0.8327);">80</div>
<div class="t tm" style="left:343.30px;top:241.70px;line-height:8.395px;font-family:'Liberation Mono', monospace;font-size:6.995833333333333px;font-weight:normal;font-style:normal;color:#8c8c8c;transform:scaleX(0.9516);">81</div>
<div class="t tm" style="left:343.30px;top:249.52px;line-height:8.395px;font-family:'Liberation Mono', monospace;font-size:6.995833333333333px;font-weight:normal;font-style:normal;color:#8c8c8c;transform:scaleX(0.8327);">82</div>
<div class="t tm" style="left:343.30px;top:257.34px;line-height:8.395px;font-family:'Liberation Mono', monospace;font-size:6.995833333333333px;font-weight:normal;font-style:normal;color:#8c8c8c;transform:scaleX(0.8327);">83</div>
<div class="t tm" style="left:343.30px;top:265.16px;line-height:8.395px;font-family:'Liberation Mono', monospace;font-size:6.995833333333333px;font-weight:normal;font-style:normal;color:#8c8c8c;transform:scaleX(0.8327);">84</div>
<div class="t tm" style="left:343.30px;top:272.98px;line-height:8.395px;font-family:'Liberation Mono', monospace;font-size:6.995833333333333px;font-weight:normal;font-style:normal;color:#8c8c8c;transform:scaleX(0.8327);">85</div>
<div class="t tm" style="left:343.30px;top:280.80px;line-height:8.395px;font-family:'Liberation Mono', monospace;font-size:6.995833333333333px;font-weight:normal;font-style:normal;color:#8c8c8c;transform:scaleX(0.8327);">86</div>
<div class="t tm" style="left:343.30px;top:288.62px;line-height:8.395px;font-family:'Liberation Mono', monospace;font-size:6.995833333333333px;font-weight:normal;font-style:normal;color:#8c8c8c;transform:scaleX(0.8327);">87</div>
<div class="t tm" style="left:343.30px;top:296.44px;line-height:8.395px;font-family:'Liberation Mono', monospace;font-size:6.995833333333333px;font-weight:normal;font-style:normal;color:#8c8c8c;transform:scaleX(0.8327);">88</div>
<div class="t tm" style="left:343.30px;top:304.26px;line-height:8.395px;font-family:'Liberation Mono', monospace;font-size:6.995833333333333px;font-weight:normal;font-style:normal;color:#8c8c8c;transform:scaleX(0.8327);">89</div>
<div class="t tm" style="left:343.30px;top:312.08px;line-height:8.395px;font-family:'Liberation Mono', monospace;font-size:6.995833333333333px;font-weight:normal;font-style:normal;color:#8c8c8c;transform:scaleX(0.8327);">90</div>
<div class="t tm" style="left:343.30px;top:319.90px;line-height:8.395px;font-family:'Liberation Mono', monospace;font-size:6.995833333333333px;font-weight:normal;font-style:normal;color:#8c8c8c;transform:scaleX(0.9516);">91</div>
<div class="t tm" style="left:343.30px;top:327.72px;line-height:8.395px;font-family:'Liberation Mono', monospace;font-size:6.995833333333333px;font-weight:normal;font-style:normal;color:#8c8c8c;transform:scaleX(0.8327);">92</div>
<div class="t tm" style="left:343.30px;top:335.54px;line-height:8.395px;font-family:'Liberation Mono', monospace;font-size:6.995833333333333px;font-weight:normal;font-style:normal;color:#8c8c8c;transform:scaleX(0.8327);">93</div>
<div class="t tm" style="left:343.30px;top:343.36px;line-height:8.395px;font-family:'Liberation Mono', monospace;font-size:6.995833333333333px;font-weight:normal;font-style:normal;color:#8c8c8c;transform:scaleX(0.8327);">94</div>
<div style="left:598.6px;top:175.8px;width:8px;height:173.6px;background:#f0f0f0"></div>
<svg style="left:600px;top:179px" width="5" height="3.5" viewBox="0 0 5 3.5"><path d="M0.5 3L2.5 1L4.5 3" fill="none" stroke="#555" stroke-width="0.9"/></svg>
<svg style="left:600px;top:342.5px" width="5" height="3.5" viewBox="0 0 5 3.5"><path d="M0.5 0.5L2.5 2.5L4.5 0.5" fill="none" stroke="#555" stroke-width="0.9"/></svg>
<div style="left:599.2px;top:256.6px;width:6.8px;height:22.2px;background:#cdcdcd"></div>
<div style="left:608px;top:265px;width:4px;height:2px;border:1px solid #f0c890;background:#fff8e8"></div>
<div style="left:608px;top:285.5px;width:4px;height:2px;border:1px solid #f0c890;background:#fff8e8"></div>
<div style="left:608px;top:292px;width:4px;height:2px;border:1px solid #f0c890;background:#fff8e8"></div>
<div style="left:340px;top:349.4px;width:258.6px;height:7.4px;background:#f0f0f0"></div>
<svg style="left:354px;top:351.2px" width="3.5" height="5" viewBox="0 0 3.5 5"><path d="M3 0.5L1 2.5L3 4.5" fill="none" stroke="#555" stroke-width="0.9"/></svg>
<svg style="left:592px;top:351.2px" width="3.5" height="5" viewBox="0 0 3.5 5"><path d="M0.5 0.5L2.5 2.5L0.5 4.5" fill="none" stroke="#555" stroke-width="0.9"/></svg>
<div style="left:360px;top:350.2px;width:162.3px;height:5.8px;background:#cdcdcd"></div>
<div style="left:617.8px;top:148.8px;width:382px;height:210.5px;background:#fff;border:1px solid;border-color:#f0f0f0 #e0e0e0 #cdcdcd #e0e0e0;border-radius:2px 2px 0 0"></div>
<div style="left:618.8px;top:149.8px;width:380px;height:12.5px;background:#f3f3f3"></div>
<div style="left:618.8px;top:162.3px;width:380px;height:197px;background:#f0f0f0"></div>
<svg style="left:620.5px;top:154.5px" width="6.5" height="6" viewBox="0 0 6.5 6"><path d="M0 0.5H6.5M0 2.2H6.5M0 3.9H6.5M0 5.6H6.5" stroke="#4a7ac0" stroke-width="0.9"/><rect x="0" y="0" width="2" height="6" fill="#4a7ac0"/></svg>
<div class="t" style="left:631.00px;top:152.30px;line-height:9.0px;font-family:'Liberation Sans', sans-serif;font-size:7.5px;font-weight:normal;font-style:normal;color:#1a1a1a;transform:scaleX(0.7815);">Disassembly</div>
<div style="left:668px;top:149.8px;width:71.7px;height:12.5px;background:#fff"></div>
<svg style="left:673px;top:153.5px" width="4.5" height="7" viewBox="0 0 4.5 7"><rect x="0.5" y="0.5" width="3.5" height="6" rx="1.5" fill="#fff" stroke="#3a6ab0" stroke-width="1"/></svg>
<div class="t" style="left:679.80px;top:152.30px;line-height:9.0px;font-family:'Liberation Sans', sans-serif;font-size:7.5px;font-weight:normal;font-style:normal;color:#1a1a1a;transform:scaleX(0.8106);">Memory Browser</div>
<svg style="position:absolute;left:731px;top:154.5px" width="6" height="6" viewBox="0 0 6 6"><path d="M1.5 1.5L4.5 4.5M4.5 1.5L1.5 4.5" stroke="#9a9a9a" stroke-width="0.7"/><path d="M0.3 1.5V0.3H1.5M4.5 0.3H5.7V1.5M5.7 4.5V5.7H4.5M1.5 5.7H0.3V4.5" fill="none" stroke="#9a9a9a" stroke-width="0.7"/></svg>
<svg style="left:851.5px;top:152px" width="8" height="8" viewBox="0 0 8 8"><circle cx="4" cy="4" r="3.6" fill="#2a9a3a"/><path d="M2 5.5L5.8 2" stroke="#fff" stroke-width="1.1"/></svg>
<svg style="left:862px;top:155px" width="4" height="3" viewBox="0 0 4 3"><path d="M0 0H4L2 2.5Z" fill="#222"/></svg>
<svg style="left:870.5px;top:151.5px" width="7.5" height="8" viewBox="0 0 7.5 8"><rect x="0.5" y="0.5" width="6.5" height="7" rx="0.8" fill="#fff" stroke="#555" stroke-width="0.8"/><path d="M2 5L5 2.5" stroke="#555" stroke-width="0.7"/></svg>
<svg style="left:881.5px;top:155px" width="4" height="3" viewBox="0 0 4 3"><path d="M0 0H4L2 2.5Z" fill="#222"/></svg>
<svg style="left:890px;top:152.5px" width="8" height="6" viewBox="0 0 8 6"><path d="M0.5 3.5L4 0.5L7.5 2.5L4 5.5Z" fill="#777"/></svg>
<svg style="left:900.5px;top:155px" width="4" height="3" viewBox="0 0 4 3"><path d="M0 0H4L2 2.5Z" fill="#222"/></svg>
<svg style="left:908.5px;top:151.5px" width="8" height="8" viewBox="0 0 8 8"><circle cx="2.8" cy="5" r="2.3" fill="#e8b830"/><circle cx="5.2" cy="2.8" r="2.3" fill="#f0c850"/></svg>
<svg style="left:920.5px;top:151.5px" width="8" height="8" viewBox="0 0 8 8"><circle cx="4" cy="4" r="3" fill="none" stroke="#e0a830" stroke-width="1.6"/><rect x="2.5" y="3" width="3" height="2.5" fill="#777"/></svg>
<div style="left:932.5px;top:151px;width:1px;height:9px;background:#c8c8c8"></div>
<svg style="left:937px;top:151.5px" width="8" height="7.5" viewBox="0 0 8 7.5"><rect x="0.5" y="1" width="7" height="6" fill="#fff" stroke="#6a90c0" stroke-width="0.7"/><rect x="0.5" y="1" width="7" height="1.6" fill="#5d8ed8"/><circle cx="7" cy="1.5" r="1.3" fill="#e8b830"/></svg>
<svg style="left:949.5px;top:151.5px" width="8" height="7.5" viewBox="0 0 8 7.5"><rect x="0.5" y="2" width="6.5" height="5" fill="#fff" stroke="#4a7ac0" stroke-width="0.7"/><rect x="0.5" y="2" width="6.5" height="1.6" fill="#3a6ab0"/><path d="M4 4L7.5 0.5" stroke="#555" stroke-width="0.8"/></svg>
<svg style="position:absolute;left:964.5px;top:152.8px" width="7" height="4" viewBox="0 0 7 4"><path d="M0.5 0.5H6.5L3.5 3.3Z" fill="#d8d8d8" stroke="#a0a0a0" stroke-width="0.6"/></svg>
<div style="left:973.5px;top:152.3px;width:5.6px;height:2.4px;border:0.8px solid #8a8a8a;border-radius:1.2px;background:#fff"></div>
<div style="left:986.8px;top:152.0px;width:5.8px;height:5.2px;border:0.8px solid #7a7a7a;border-top:1.4px solid #7a7a7a;border-radius:0.8px;background:#fff"></div>
<div style="left:625.6px;top:163px;width:346.1px;height:10.4px;background:#fff;border:1px solid #c8c8c8;border-bottom:1.5px solid #aaa"></div>
<div class="t" style="left:628.80px;top:163.90px;line-height:9.0px;font-family:'Liberation Sans', sans-serif;font-size:7.5px;font-weight:normal;font-style:normal;color:#1a1a1a;transform:scaleX(0.8545);">buttonPinHandle</div>
<div style="left:972.7px;top:163px;width:9.7px;height:11px;background:#e6e6e6;border:1px solid #ccc"></div>
<svg style="left:974px;top:165px" width="7" height="7" viewBox="0 0 7 7"><rect x="0.5" y="2" width="4" height="4.5" fill="#dde8f5" stroke="#6a90c0" stroke-width="0.5"/><rect x="2.5" y="0.5" width="4" height="4.5" fill="#f3e6c0" stroke="#b89a50" stroke-width="0.5"/></svg>
<div style="left:619.5px;top:174.3px;width:379px;height:185px;background:#fff;border:1px solid #c8c8c8"></div>
<div style="left:620.5px;top:175.3px;width:377px;height:9.3px;background:#fff;border-bottom:1px solid #c0c0c0"></div>
<div style="left:620.5px;top:175.3px;width:164.5px;height:9.3px;background:#d9e4f5"></div>
<div class="t" style="left:621.00px;top:175.30px;line-height:9.0px;font-family:'Liberation Sans', sans-serif;font-size:7.5px;font-weight:normal;font-style:normal;color:#1a1a1a;transform:scaleX(0.8220);">0x20001f30 - buttonPinHandle &lt;Memory Rendering 1&gt;</div>
<svg style="position:absolute;left:776.3px;top:177px" width="6" height="6" viewBox="0 0 6 6"><path d="M1.5 1.5L4.5 4.5M4.5 1.5L1.5 4.5" stroke="#9a9a9a" stroke-width="0.7"/><path d="M0.3 1.5V0.3H1.5M4.5 0.3H5.7V1.5M5.7 4.5V5.7H4.5M1.5 5.7H0.3V4.5" fill="none" stroke="#9a9a9a" stroke-width="0.7"/></svg>
<div style="left:620.5px;top:185.3px;width:377px;height:174px;background:#fff"></div>
<div style="left:621.7px;top:186px;width:79.3px;height:12px;background:#e5e5e5;border:1px solid #adadad"></div>
<div class="t" style="left:623.70px;top:187.70px;line-height:9.0px;font-family:'Liberation Sans', sans-serif;font-size:7.5px;font-weight:normal;font-style:normal;color:#1a1a1a;transform:scaleX(0.8060);">32-Bit Hex - TI Style</div>
<svg style="left:694.5px;top:190.5px" width="5" height="3" viewBox="0 0 5 3"><path d="M0.5 0.5L2.5 2.5L4.5 0.5" fill="none" stroke="#333" stroke-width="0.8"/></svg>
<div class="t tm" style="left:624.00px;top:199.09px;line-height:8.464px;font-family:'Liberation Mono', monospace;font-size:7.053333333333334px;font-weight:normal;font-style:normal;color:#2a2a2a;transform:scaleX(0.8715);">0x20001F30</div>
<div class="t tm" style="left:667.70px;top:199.14px;line-height:8.395px;font-family:'Liberation Mono', monospace;font-size:6.995833333333333px;font-weight:normal;font-style:normal;color:#2f2fd8;transform:scaleX(0.8678);">buttonPinState</div>
<div style="left:623.4px;top:206.255px;width:37.8px;height:7.6px;background:#3875d7"></div>
<div style="left:667.7px;top:206.255px;width:30.9px;height:7.6px;background:#3875d7"></div>
<div class="t tm" style="left:624.00px;top:206.95px;line-height:8.464px;font-family:'Liberation Mono', monospace;font-size:7.053333333333334px;font-weight:normal;font-style:normal;color:#fff;transform:scaleX(0.8715);">0x20001F30</div>
<div class="t tm" style="left:668.70px;top:207.24px;line-height:8.05px;font-family:'Liberation Mono', monospace;font-size:6.708333333333334px;font-weight:normal;font-style:normal;color:#fff;transform:scaleX(0.8750);">00002BB1</div>
<div class="t tm" style="left:700.50px;top:207.24px;line-height:8.05px;font-family:'Liberation Mono', monospace;font-size:6.708333333333334px;font-weight:normal;font-style:normal;color:#2a2a2a;transform:scaleX(0.8677);">00006000 00000000</div>
<div class="t tm" style="left:624.00px;top:214.80px;line-height:8.464px;font-family:'Liberation Mono', monospace;font-size:7.053333333333334px;font-weight:normal;font-style:normal;color:#2a2a2a;transform:scaleX(0.8715);">0x20001F3C</div>
<div class="t tm" style="left:667.70px;top:214.85px;line-height:8.395px;font-family:'Liberation Mono', monospace;font-size:6.995833333333333px;font-weight:normal;font-style:normal;color:#2f2fd8;transform:scaleX(0.8956);">ledPinState</div>
<div class="t tm" style="left:624.00px;top:222.66px;line-height:8.464px;font-family:'Liberation Mono', monospace;font-size:7.053333333333334px;font-weight:normal;font-style:normal;color:#2a2a2a;transform:scaleX(0.8715);">0x20001F3C</div>
<div class="t tm" style="left:668.70px;top:222.95px;line-height:8.05px;font-family:'Liberation Mono', monospace;font-size:6.708333333333334px;font-weight:normal;font-style:normal;color:#2a2a2a;transform:scaleX(0.8750);">00000000 000000C0 00000000</div>
<div class="t tm" style="left:624.00px;top:230.51px;line-height:8.464px;font-family:'Liberation Mono', monospace;font-size:7.053333333333334px;font-weight:normal;font-style:normal;color:#2a2a2a;transform:scaleX(0.8715);">0x20001F48</div>
<div class="t tm" style="left:667.70px;top:230.56px;line-height:8.395px;font-family:'Liberation Mono', monospace;font-size:6.995833333333333px;font-weight:normal;font-style:normal;color:#2f2fd8;transform:scaleX(0.8651);">buttonPinHandle</div>
<div class="t tm" style="left:624.00px;top:238.37px;line-height:8.464px;font-family:'Liberation Mono', monospace;font-size:7.053333333333334px;font-weight:normal;font-style:normal;color:#2a2a2a;transform:scaleX(0.8715);">0x20001F48</div>
<div class="t tm" style="left:668.70px;top:238.66px;line-height:8.05px;font-family:'Liberation Mono', monospace;font-size:6.708333333333334px;font-weight:normal;font-style:normal;color:#2a2a2a;transform:scaleX(0.8750);">20001F30</div>
<div class="t tm" style="left:624.00px;top:246.22px;line-height:8.464px;font-family:'Liberation Mono', monospace;font-size:7.053333333333334px;font-weight:normal;font-style:normal;color:#2a2a2a;transform:scaleX(0.8715);">0x20001F4C</div>
<div class="t tm" style="left:667.70px;top:246.27px;line-height:8.395px;font-family:'Liberation Mono', monospace;font-size:6.995833333333333px;font-weight:normal;font-style:normal;color:#2f2fd8;transform:scaleX(0.8898);">ledPinHandle</div>
<div class="t tm" style="left:624.00px;top:254.08px;line-height:8.464px;font-family:'Liberation Mono', monospace;font-size:7.053333333333334px;font-weight:normal;font-style:normal;color:#2a2a2a;transform:scaleX(0.8715);">0x20001F4C</div>
<div class="t tm" style="left:668.70px;top:254.37px;line-height:8.05px;font-family:'Liberation Mono', monospace;font-size:6.708333333333334px;font-weight:normal;font-style:normal;color:#2a2a2a;transform:scaleX(0.8750);">20001F3C</div>
<div class="t tm" style="left:624.00px;top:261.93px;line-height:8.464px;font-family:'Liberation Mono', monospace;font-size:7.053333333333334px;font-weight:normal;font-style:normal;color:#2a2a2a;transform:scaleX(0.8715);">0x20001F50</div>
<div class="t tm" style="left:667.70px;top:261.98px;line-height:8.395px;font-family:'Liberation Mono', monospace;font-size:6.995833333333333px;font-weight:normal;font-style:normal;color:#2f2fd8;transform:scaleX(0.8685);">ti_sysbios_knl_Task_Instance_State_0_hookEnv__A</div>
<div class="t tm" style="left:624.00px;top:269.79px;line-height:8.464px;font-family:'Liberation Mono', monospace;font-size:7.053333333333334px;font-weight:normal;font-style:normal;color:#2a2a2a;transform:scaleX(0.8715);">0x20001F50</div>
<div class="t tm" style="left:668.70px;top:270.08px;line-height:8.05px;font-family:'Liberation Mono', monospace;font-size:6.708333333333334px;font-weight:normal;font-style:normal;color:#2a2a2a;transform:scaleX(0.8677);">00000000 200024E4</div>
<div class="t tm" style="left:624.00px;top:277.64px;line-height:8.464px;font-family:'Liberation Mono', monospace;font-size:7.053333333333334px;font-weight:normal;font-style:normal;color:#2a2a2a;transform:scaleX(0.8715);">0x20001F58</div>
<div class="t tm" style="left:667.70px;top:277.69px;line-height:8.395px;font-family:'Liberation Mono', monospace;font-size:6.995833333333333px;font-weight:normal;font-style:normal;color:#2f2fd8;transform:scaleX(0.8746);">ClockP_tickPeriod</div>
<div class="t tm" style="left:624.00px;top:285.50px;line-height:8.464px;font-family:'Liberation Mono', monospace;font-size:7.053333333333334px;font-weight:normal;font-style:normal;color:#2a2a2a;transform:scaleX(0.8715);">0x20001F58</div>
<div class="t tm" style="left:668.70px;top:285.79px;line-height:8.05px;font-family:'Liberation Mono', monospace;font-size:6.708333333333334px;font-weight:normal;font-style:normal;color:#2a2a2a;transform:scaleX(0.8750);">0000000A</div>
<div class="t tm" style="left:624.00px;top:293.35px;line-height:8.464px;font-family:'Liberation Mono', monospace;font-size:7.053333333333334px;font-weight:normal;font-style:normal;color:#2a2a2a;transform:scaleX(0.8715);">0x20001F5C</div>
<div class="t tm" style="left:667.70px;top:293.40px;line-height:8.395px;font-family:'Liberation Mono', monospace;font-size:6.995833333333333px;font-weight:normal;font-style:normal;color:#2f2fd8;transform:scaleX(0.8738);">PowerCC26XX_swiKey</div>
<div class="t tm" style="left:624.00px;top:301.21px;line-height:8.464px;font-family:'Liberation Mono', monospace;font-size:7.053333333333334px;font-weight:normal;font-style:normal;color:#2a2a2a;transform:scaleX(0.8715);">0x20001F5C</div>
<div class="t tm" style="left:668.70px;top:301.50px;line-height:8.05px;font-family:'Liberation Mono', monospace;font-size:6.708333333333334px;font-weight:normal;font-style:normal;color:#2a2a2a;transform:scaleX(0.8750);">00000000</div>
<div class="t tm" style="left:624.00px;top:309.06px;line-height:8.464px;font-family:'Liberation Mono', monospace;font-size:7.053333333333334px;font-weight:normal;font-style:normal;color:#2a2a2a;transform:scaleX(0.8715);">0x20001F60</div>
<div class="t tm" style="left:667.70px;top:309.11px;line-height:8.395px;font-family:'Liberation Mono', monospace;font-size:6.995833333333333px;font-weight:normal;font-style:normal;color:#2f2fd8;transform:scaleX(0.8713);">PowerCC26XX_taskKey</div>
<div class="t tm" style="left:624.00px;top:316.92px;line-height:8.464px;font-family:'Liberation Mono', monospace;font-size:7.053333333333334px;font-weight:normal;font-style:normal;color:#2a2a2a;transform:scaleX(0.8715);">0x20001F60</div>
<div class="t tm" style="left:668.70px;top:317.21px;line-height:8.05px;font-family:'Liberation Mono', monospace;font-size:6.708333333333334px;font-weight:normal;font-style:normal;color:#2a2a2a;transform:scaleX(0.8750);">00000000</div>
<div class="t tm" style="left:624.00px;top:324.77px;line-height:8.464px;font-family:'Liberation Mono', monospace;font-size:7.053333333333334px;font-weight:normal;font-style:normal;color:#2a2a2a;transform:scaleX(0.8715);">0x20001F64</div>
<div class="t tm" style="left:667.70px;top:324.82px;line-height:8.395px;font-family:'Liberation Mono', monospace;font-size:6.995833333333333px;font-weight:normal;font-style:normal;color:#2f2fd8;transform:scaleX(0.8714);">driverlib_release_0_55938</div>
<div class="t tm" style="left:624.00px;top:332.63px;line-height:8.464px;font-family:'Liberation Mono', monospace;font-size:7.053333333333334px;font-weight:normal;font-style:normal;color:#2a2a2a;transform:scaleX(0.8715);">0x20001F64</div>
<div class="t tm" style="left:668.70px;top:332.92px;line-height:8.05px;font-family:'Liberation Mono', monospace;font-size:6.708333333333334px;font-weight:normal;font-style:normal;color:#2a2a2a;transform:scaleX(0.8715);">00000000 00000000 00000000 00000000 00000000 00000000 00000000</div>
<div class="t tm" style="left:624.00px;top:340.48px;line-height:8.464px;font-family:'Liberation Mono', monospace;font-size:7.053333333333334px;font-weight:normal;font-style:normal;color:#2a2a2a;transform:scaleX(0.8715);">0x20001F80</div>
<div class="t tm" style="left:667.70px;top:340.53px;line-height:8.395px;font-family:'Liberation Mono', monospace;font-size:6.995833333333333px;font-weight:normal;font-style:normal;color:#2f2fd8;transform:scaleX(0.8695);">ti_uia_loggers_LoggerStopMode_Instance_State_1_hdr__A</div>
<div class="t tm" style="left:624.00px;top:348.34px;line-height:8.464px;font-family:'Liberation Mono', monospace;font-size:7.053333333333334px;font-weight:normal;font-style:normal;color:#2a2a2a;transform:scaleX(0.8715);">0x20001F80</div>
<div class="t tm" style="left:668.70px;top:348.63px;line-height:8.05px;font-family:'Liberation Mono', monospace;font-size:6.708333333333334px;font-weight:normal;font-style:normal;color:#2a2a2a;transform:scaleX(0.8712);">00000030 00000000 00000008 20001100 20001100 20001100 00000800 00000002 00000038 00000001</div>
<div style="left:989.5px;top:198.5px;width:7.5px;height:160px;background:#f0f0f0"></div>
<svg style="left:991px;top:201.5px" width="5" height="3.5" viewBox="0 0 5 3.5"><path d="M0.5 3L2.5 1L4.5 3" fill="none" stroke="#555" stroke-width="0.9"/></svg>
<svg style="left:991px;top:352px" width="5" height="3.5" viewBox="0 0 5 3.5"><path d="M0.5 0.5L2.5 2.5L4.5 0.5" fill="none" stroke="#555" stroke-width="0.9"/></svg>
<div style="left:990.2px;top:264px;width:6px;height:30px;background:#cdcdcd"></div>
<div style="left:1.8px;top:363px;width:243.2px;height:163px;background:#fff;border:1px solid;border-color:#f0f0f0 #e0e0e0 #cdcdcd #e0e0e0;border-radius:2px 2px 0 0"></div>
<div style="left:2.8px;top:364px;width:241.2px;height:11.6px;background:#f7f7f7"></div>
<div style="left:2.8px;top:364px;width:46.2px;height:11.6px;background:#fff"></div>
<svg style="left:4.5px;top:366px" width="7" height="7" viewBox="0 0 7 7"><rect x="0.5" y="0.5" width="6" height="6" rx="1.2" fill="#dfe8f5" stroke="#3a6ab0" stroke-width="1"/><path d="M2 3.5H5" stroke="#3a6ab0" stroke-width="0.7"/></svg>
<div class="t" style="left:13.80px;top:365.30px;line-height:9.0px;font-family:'Liberation Sans', sans-serif;font-size:7.5px;font-weight:normal;font-style:normal;color:#1a1a1a;transform:scaleX(0.8008);">Console</div>
<svg style="position:absolute;left:40px;top:366.5px" width="6" height="6" viewBox="0 0 6 6"><path d="M1.5 1.5L4.5 4.5M4.5 1.5L1.5 4.5" stroke="#9a9a9a" stroke-width="0.7"/><path d="M0.3 1.5V0.3H1.5M4.5 0.3H5.7V1.5M5.7 4.5V5.7H4.5M1.5 5.7H0.3V4.5" fill="none" stroke="#9a9a9a" stroke-width="0.7"/></svg>
<svg style="left:128.5px;top:365px" width="7" height="7.5" viewBox="0 0 7 7.5"><rect x="0.5" y="0.5" width="5" height="6.5" fill="#e6eef8" stroke="#8aa" stroke-width="0.5"/><path d="M3.5 4.5L6.5 7.5M6.5 4.5L3.5 7.5" stroke="#555" stroke-width="0.8"/></svg>
<svg style="left:140.5px;top:365px" width="7.5" height="7.5" viewBox="0 0 7.5 7.5"><rect x="0.5" y="0.5" width="6.5" height="6.5" fill="#f0f0f0" stroke="#999" stroke-width="0.5"/><rect x="0.5" y="3.5" width="3.5" height="3.5" fill="#e8b830"/><path d="M5 1.5V6" stroke="#4a7ac0" stroke-width="1"/></svg>
<svg style="left:152.5px;top:365px" width="7.5" height="7.5" viewBox="0 0 7.5 7.5"><rect x="0.5" y="0.5" width="6.5" height="6.5" fill="#f4f0e0" stroke="#c8b890" stroke-width="0.5"/><path d="M2 4H6" stroke="#e8b830" stroke-width="1.2"/></svg>
<div style="left:163.5px;top:365px;width:1px;height:9px;background:#c8c8c8"></div>
<svg style="left:168.5px;top:365px" width="7.5" height="7.5" viewBox="0 0 7.5 7.5"><rect x="0.5" y="2.5" width="6" height="4.5" fill="#fff" stroke="#3a6ab0" stroke-width="0.7"/><rect x="0.5" y="2.5" width="6" height="1.5" fill="#3a6ab0"/><path d="M3.5 3.5L7 0.5" stroke="#2a9a3a" stroke-width="1.3"/></svg>
<svg style="left:180.8px;top:364.5px" width="7.5" height="7.5" viewBox="0 0 7.5 7.5"><rect x="0.5" y="0.5" width="6.5" height="6" rx="1.3" fill="#dfe8f5" stroke="#3a6ab0" stroke-width="1"/><path d="M2.5 2.8H5" stroke="#3a6ab0" stroke-width="0.7"/></svg>
<svg style="left:192px;top:367.5px" width="4" height="3" viewBox="0 0 4 3"><path d="M0 0H4L2 2.5Z" fill="#222"/></svg>
<svg style="left:200.5px;top:365px" width="8" height="7.5" viewBox="0 0 8 7.5"><rect x="0.5" y="1" width="7" height="6" fill="#fff" stroke="#6a90c0" stroke-width="0.7"/><rect x="0.5" y="1" width="7" height="1.6" fill="#5d8ed8"/><circle cx="7" cy="1.5" r="1.3" fill="#e8b830"/></svg>
<svg style="left:212px;top:367.5px" width="4" height="3" viewBox="0 0 4 3"><path d="M0 0H4L2 2.5Z" fill="#222"/></svg>
<div style="left:218px;top:365.8px;width:5.6px;height:2.4px;border:0.8px solid #8a8a8a;border-radius:1.2px;background:#fff"></div>
<div style="left:232.3px;top:365.5px;width:5.8px;height:5.2px;border:0.8px solid #7a7a7a;border-top:1.4px solid #7a7a7a;border-radius:0.8px;background:#fff"></div>
<div class="t" style="left:2.00px;top:376.30px;line-height:9.0px;font-family:'Liberation Sans', sans-serif;font-size:7.5px;font-weight:normal;font-style:normal;color:#1a1a1a;transform:scaleX(0.7875);">pinInterrupt_CC26X2R1_LAUNCHXL_tirtos_ccs</div>
<div style="left:2.8px;top:384.2px;width:241.2px;height:0.8px;background:#d8d8d8"></div>
<div class="t tm" style="left:2.80px;top:385.56px;line-height:8.372px;font-family:'Liberation Mono', monospace;font-size:6.976666666666667px;font-weight:normal;font-style:normal;color:#222;transform:scaleX(0.8752);">Cortex_M4_0: GEL Output: Memory Map Initialization Complete.</div>
<div style="left:236px;top:385px;width:8.5px;height:132px;background:#f0f0f0"></div>
<svg style="left:238px;top:388px" width="5" height="3.5" viewBox="0 0 5 3.5"><path d="M0.5 3L2.5 1L4.5 3" fill="none" stroke="#bbb" stroke-width="0.9"/></svg>
<svg style="left:238px;top:510px" width="5" height="3.5" viewBox="0 0 5 3.5"><path d="M0.5 0.5L2.5 2.5L4.5 0.5" fill="none" stroke="#bbb" stroke-width="0.9"/></svg>
<div style="left:2.8px;top:517px;width:241.7px;height:8.5px;background:#f0f0f0"></div>
<svg style="left:4px;top:519px" width="3.5" height="5" viewBox="0 0 3.5 5"><path d="M3 0.5L1 2.5L3 4.5" fill="none" stroke="#bbb" stroke-width="0.9"/></svg>
<svg style="left:229px;top:519px" width="3.5" height="5" viewBox="0 0 3.5 5"><path d="M0.5 0.5L2.5 2.5L0.5 4.5" fill="none" stroke="#bbb" stroke-width="0.9"/></svg>
<div style="left:247.3px;top:363px;width:752px;height:163px;background:#fff;border:1px solid;border-color:#f0f0f0 #e0e0e0 #cdcdcd #e0e0e0;border-radius:2px 2px 0 0"></div>
<div style="left:248.3px;top:364px;width:750px;height:11.6px;background:#f7f7f7"></div>
<div style="left:248.3px;top:364px;width:48.7px;height:11.6px;background:#fff"></div>
<svg style="left:250.5px;top:366px" width="7.5" height="7" viewBox="0 0 7.5 7"><rect x="0" y="0" width="7.5" height="7" fill="#dce6f2"/><path d="M0 1H7.5M0 3H7.5M0 5H7.5" stroke="#4a7ac0" stroke-width="0.9"/></svg>
<div class="t" style="left:259.70px;top:365.30px;line-height:9.0px;font-family:'Liberation Sans', sans-serif;font-size:7.5px;font-weight:normal;font-style:normal;color:#1a1a1a;transform:scaleX(0.7273);">GEL Files</div>
<svg style="position:absolute;left:288px;top:366.5px" width="6" height="6" viewBox="0 0 6 6"><path d="M1.5 1.5L4.5 4.5M4.5 1.5L1.5 4.5" stroke="#9a9a9a" stroke-width="0.7"/><path d="M0.3 1.5V0.3H1.5M4.5 0.3H5.7V1.5M5.7 4.5V5.7H4.5M1.5 5.7H0.3V4.5" fill="none" stroke="#9a9a9a" stroke-width="0.7"/></svg>
<div style="left:973.5px;top:365.3px;width:5.6px;height:2.4px;border:0.8px solid #8a8a8a;border-radius:1.2px;background:#fff"></div>
<div style="left:987.8px;top:365.0px;width:5.8px;height:5.2px;border:0.8px solid #7a7a7a;border-top:1.4px solid #7a7a7a;border-radius:0.8px;background:#fff"></div>
<div style="left:248.3px;top:375.6px;width:750px;height:150px;background:#fff"></div>
<div style="left:250.5px;top:378.3px;width:272.1px;height:10.5px;background:#fff;border:1px solid #c8c8c8"></div>
<div class="t" style="left:252.70px;top:379.90px;line-height:9.0px;font-family:'Liberation Sans', sans-serif;font-size:7.5px;font-weight:normal;font-style:normal;color:#555;transform:scaleX(0.8667);">type filter text</div>
<div style="left:259.4px;top:401.55px;width:28.3px;height:8.5px;background:#d9d9d9"></div>
<div class="t" style="left:261.60px;top:392.00px;line-height:9.0px;font-family:'Liberation Sans', sans-serif;font-size:7.5px;font-weight:normal;font-style:normal;color:#1a1a1a;transform:scaleX(0.8638);">Memory Map</div>
<div class="t" style="left:261.60px;top:401.35px;line-height:9.0px;font-family:'Liberation Sans', sans-serif;font-size:7.5px;font-weight:normal;font-style:normal;color:#1a1a1a;transform:scaleX(0.7214);">GEL Files</div>
<div class="t" style="left:261.60px;top:410.70px;line-height:9.0px;font-family:'Liberation Sans', sans-serif;font-size:7.5px;font-weight:normal;font-style:normal;color:#1a1a1a;transform:scaleX(0.8126);">On-Chip Flash</div>
<div class="t" style="left:261.60px;top:420.05px;line-height:9.0px;font-family:'Liberation Sans', sans-serif;font-size:7.5px;font-weight:normal;font-style:normal;color:#1a1a1a;transform:scaleX(0.7952);">ARM Advanced Features</div>
<div class="t" style="left:261.60px;top:429.40px;line-height:9.0px;font-family:'Liberation Sans', sans-serif;font-size:7.5px;font-weight:normal;font-style:normal;color:#1a1a1a;transform:scaleX(0.8496);">Program/Memory Load Options</div>
<div class="t" style="left:261.60px;top:438.75px;line-height:9.0px;font-family:'Liberation Sans', sans-serif;font-size:7.5px;font-weight:normal;font-style:normal;color:#1a1a1a;transform:scaleX(0.8218);">Auto Run and Launch Options</div>
<div class="t" style="left:261.60px;top:448.10px;line-height:9.0px;font-family:'Liberation Sans', sans-serif;font-size:7.5px;font-weight:normal;font-style:normal;color:#1a1a1a;transform:scaleX(0.8438);">Misc/Other Options</div>
<div class="t" style="left:261.60px;top:457.45px;line-height:9.0px;font-family:'Liberation Sans', sans-serif;font-size:7.5px;font-weight:normal;font-style:normal;color:#1a1a1a;transform:scaleX(0.8044);">MSP43x Debugger Options</div>
<div class="t" style="left:261.60px;top:466.80px;line-height:9.0px;font-family:'Liberation Sans', sans-serif;font-size:7.5px;font-weight:normal;font-style:normal;color:#1a1a1a;transform:scaleX(0.8033);">Cortex M Disassembly Style Options</div>
<div style="left:253px;top:398.2px;width:190.3px;height:13.3px;border:3.5px solid #a00000;border-radius:2px"></div>
<div style="left:527.2px;top:376.5px;width:472px;height:149px;background:#f0f0f0;border-left:1px solid #d0d0d0;border-top:1px solid #d8d8d8"></div>
<div class="t" style="left:532.80px;top:383.70px;line-height:9.0px;font-family:'Liberation Sans', sans-serif;font-size:7.5px;font-weight:bold;font-style:normal;color:#222;transform:scaleX(0.8675);">GEL Files (Cortex_M4)</div>
<svg style="left:606.6px;top:384px" width="8" height="8" viewBox="0 0 8 8"><circle cx="4" cy="4" r="3.5" fill="#f4f8fc" stroke="#8aa0c0" stroke-width="0.7"/><text x="2.2" y="6.2" font-size="5.5" fill="#5a7aa8" font-family="Liberation Sans">?</text></svg>
<div style="left:530.5px;top:398.8px;width:464px;height:123px;background:#fff;border:1px solid #acacac"></div>
<div style="left:631.4px;top:399.5px;width:1px;height:121.5px;background:#e8e8e8"></div>
<div style="left:662.8px;top:399.5px;width:1px;height:121.5px;background:#e8e8e8"></div>
<div class="t" style="left:534.80px;top:402.10px;line-height:9.0px;font-family:'Liberation Sans', sans-serif;font-size:7.5px;font-weight:normal;font-style:normal;color:#1a1a1a;transform:scaleX(0.7903);">Script</div>
<div class="t" style="left:634.70px;top:402.10px;line-height:9.0px;font-family:'Liberation Sans', sans-serif;font-size:7.5px;font-weight:normal;font-style:normal;color:#1a1a1a;transform:scaleX(0.8095);">Status</div>
<div style="left:531.5px;top:422px;width:462px;height:0.8px;background:#f2f2f2"></div>
<div style="left:531.5px;top:432px;width:462px;height:0.8px;background:#f2f2f2"></div>
<div style="left:531.5px;top:442px;width:462px;height:0.8px;background:#f2f2f2"></div>
<div style="left:531.5px;top:452px;width:462px;height:0.8px;background:#f2f2f2"></div>
<div style="left:531.5px;top:462px;width:462px;height:0.8px;background:#f2f2f2"></div>
<div style="left:531.5px;top:472px;width:462px;height:0.8px;background:#f2f2f2"></div>
<div style="left:531.5px;top:482px;width:462px;height:0.8px;background:#f2f2f2"></div>
<div style="left:531.5px;top:492px;width:462px;height:0.8px;background:#f2f2f2"></div>
<div style="left:531.5px;top:502px;width:462px;height:0.8px;background:#f2f2f2"></div>
<div style="left:531.5px;top:512px;width:462px;height:0.8px;background:#f2f2f2"></div>
<svg style="left:534.5px;top:413.7px" width="8" height="7.5" viewBox="0 0 8 7.5"><circle cx="3" cy="3.5" r="2.8" fill="#2a6ab8"/><path d="M1 5L3 7L7.5 1" fill="none" stroke="#7a9a30" stroke-width="1.3"/></svg>
<div class="t" style="left:543.20px;top:413.70px;line-height:9.0px;font-family:'Liberation Sans', sans-serif;font-size:7.5px;font-weight:normal;font-style:normal;color:#1a1a1a;transform:scaleX(0.7667);">cc26x2.gel</div>
<div class="t" style="left:634.70px;top:413.70px;line-height:9.0px;font-family:'Liberation Sans', sans-serif;font-size:7.5px;font-weight:normal;font-style:normal;color:#1a1a1a;transform:scaleX(0.7504);">Success</div>
<svg style="left:534.5px;top:423.5px" width="8" height="7.5" viewBox="0 0 8 7.5"><circle cx="3" cy="3.5" r="2.8" fill="#2a6ab8"/><path d="M1 5L3 7L7.5 1" fill="none" stroke="#7a9a30" stroke-width="1.3"/></svg>
<div class="t" style="left:543.20px;top:423.50px;line-height:9.0px;font-family:'Liberation Sans', sans-serif;font-size:7.5px;font-weight:normal;font-style:normal;color:#1a1a1a;transform:scaleX(0.7876);">cc26xx_connect_util.gel</div>
<div class="t" style="left:634.70px;top:423.50px;line-height:9.0px;font-family:'Liberation Sans', sans-serif;font-size:7.5px;font-weight:normal;font-style:normal;color:#1a1a1a;transform:scaleX(0.7504);">Success</div>
<svg style="left:534.5px;top:433.3px" width="8" height="7.5" viewBox="0 0 8 7.5"><circle cx="3" cy="3.5" r="2.8" fill="#2a6ab8"/><path d="M1 5L3 7L7.5 1" fill="none" stroke="#7a9a30" stroke-width="1.3"/></svg>
<div class="t" style="left:543.20px;top:433.30px;line-height:9.0px;font-family:'Liberation Sans', sans-serif;font-size:7.5px;font-weight:normal;font-style:normal;color:#1a1a1a;transform:scaleX(0.7694);">cc26x2_xds.gel</div>
<div class="t" style="left:634.70px;top:433.30px;line-height:9.0px;font-family:'Liberation Sans', sans-serif;font-size:7.5px;font-weight:normal;font-style:normal;color:#1a1a1a;transform:scaleX(0.7504);">Success</div>
<div style="left:530.2px;top:410.5px;width:190.5px;height:14.2px;border:3.8px solid #a00000;border-radius:2px"></div>
<div style="left:0px;top:526px;width:1005px;height:15px;background:#e6e6e6"></div>
<svg style="left:793.5px;top:529.5px" width="8" height="8" viewBox="0 0 8 8"><rect x="0.5" y="3" width="5" height="4.5" fill="#e8c050"/><rect x="2.5" y="2" width="5" height="5" fill="#dce8f5" stroke="#3a6ab0" stroke-width="0.6"/></svg>
<div style="left:807.5px;top:528px;width:1px;height:11px;background:repeating-linear-gradient(to bottom,#aaa 0 1px,transparent 1px 2px)"></div>
<div style="left:959px;top:528px;width:1px;height:11px;background:repeating-linear-gradient(to bottom,#aaa 0 1px,transparent 1px 2px)"></div>
<div style="left:975px;top:528px;width:1px;height:11px;background:repeating-linear-gradient(to bottom,#aaa 0 1px,transparent 1px 2px)"></div>
<div class="t" style="left:964.00px;top:530.00px;line-height:9.0px;font-family:'Liberation Sans', sans-serif;font-size:7.5px;font-weight:normal;font-style:normal;color:#222;transform:scaleX(0.6706);">LE</div>
<div style="left:58.5px;top:70.5px;width:221.0px;height:247.2px;background:rgba(0,0,0,0.2)"></div>
<div style="left:57.5px;top:69.5px;width:220.0px;height:246.0px;background:#f2f2f2;border:1px solid;border-color:#d8d8d8 #8c8c8c #8c8c8c #d0d0d0"></div>
<div style="left:59.5px;top:128px;width:216px;height:11px;background:#91c9f7"></div>
<div class="t" style="left:75.10px;top:72.30px;line-height:9.0px;font-family:'Liberation Sans', sans-serif;font-size:7.5px;font-weight:normal;font-style:normal;color:#1a1a1a;transform:scaleX(0.8039);">Connect Target</div>
<div class="t" style="left:235.60px;top:72.30px;line-height:9.0px;font-family:'Liberation Sans', sans-serif;font-size:7.5px;font-weight:normal;font-style:normal;color:#1a1a1a;transform:scaleX(0.8860);">Ctrl+Alt+C</div>
<div class="t" style="left:75.10px;top:83.70px;line-height:9.0px;font-family:'Liberation Sans', sans-serif;font-size:7.5px;font-weight:normal;font-style:normal;color:#1a1a1a;transform:scaleX(0.8300);">Disconnect Target</div>
<div class="t" style="left:235.60px;top:83.70px;line-height:9.0px;font-family:'Liberation Sans', sans-serif;font-size:7.5px;font-weight:normal;font-style:normal;color:#1a1a1a;transform:scaleX(0.8860);">Ctrl+Alt+D</div>
<div class="t" style="left:75.10px;top:95.10px;line-height:9.0px;font-family:'Liberation Sans', sans-serif;font-size:7.5px;font-weight:normal;font-style:normal;color:#9a9a9a;transform:scaleX(0.8000);">Enable Global Breakpoints</div>
<div class="t" style="left:75.10px;top:106.50px;line-height:9.0px;font-family:'Liberation Sans', sans-serif;font-size:7.5px;font-weight:normal;font-style:normal;color:#1a1a1a;transform:scaleX(0.7918);">Enable Halt On Reset</div>
<div class="t" style="left:75.10px;top:117.90px;line-height:9.0px;font-family:'Liberation Sans', sans-serif;font-size:7.5px;font-weight:normal;font-style:normal;color:#1a1a1a;transform:scaleX(0.7973);">Enable OS Debugging</div>
<div class="t" style="left:75.10px;top:129.30px;line-height:9.0px;font-family:'Liberation Sans', sans-serif;font-size:7.5px;font-weight:normal;font-style:normal;color:#1a1a1a;transform:scaleX(0.7750);">Open GEL Files View</div>
<div class="t" style="left:75.10px;top:144.50px;line-height:9.0px;font-family:'Liberation Sans', sans-serif;font-size:7.5px;font-weight:normal;font-style:normal;color:#1a1a1a;transform:scaleX(0.8042);">Code Analysis</div>
<svg style="left:266px;top:145.5px" width="4" height="6" viewBox="0 0 4 6"><path d="M0.8 0.8L3 3L0.8 5.2" fill="none" stroke="#444" stroke-width="0.8"/></svg>
<div class="t" style="left:75.10px;top:155.70px;line-height:9.0px;font-family:'Liberation Sans', sans-serif;font-size:7.5px;font-weight:normal;font-style:normal;color:#1a1a1a;transform:scaleX(0.7955);">SoC Analysis</div>
<svg style="left:266px;top:156.7px" width="4" height="6" viewBox="0 0 4 6"><path d="M0.8 0.8L3 3L0.8 5.2" fill="none" stroke="#444" stroke-width="0.8"/></svg>
<div class="t" style="left:75.10px;top:170.90px;line-height:9.0px;font-family:'Liberation Sans', sans-serif;font-size:7.5px;font-weight:normal;font-style:normal;color:#1a1a1a;transform:scaleX(0.8049);">Hide core(s)</div>
<div class="t" style="left:75.10px;top:182.40px;line-height:9.0px;font-family:'Liberation Sans', sans-serif;font-size:7.5px;font-weight:normal;font-style:normal;color:#1a1a1a;transform:scaleX(0.7878);">Show all cores</div>
<div class="t" style="left:75.10px;top:194.00px;line-height:9.0px;font-family:'Liberation Sans', sans-serif;font-size:7.5px;font-weight:normal;font-style:normal;color:#1a1a1a;transform:scaleX(0.8045);">Group core(s)</div>
<div class="t" style="left:75.10px;top:205.30px;line-height:9.0px;font-family:'Liberation Sans', sans-serif;font-size:7.5px;font-weight:normal;font-style:normal;color:#9a9a9a;transform:scaleX(0.8191);">Sync group core(s)</div>
<div class="t" style="left:75.10px;top:216.80px;line-height:9.0px;font-family:'Liberation Sans', sans-serif;font-size:7.5px;font-weight:normal;font-style:normal;color:#1a1a1a;transform:scaleX(0.8259);">Ungroup core(s)</div>
<div class="t" style="left:75.10px;top:227.90px;line-height:9.0px;font-family:'Liberation Sans', sans-serif;font-size:7.5px;font-weight:normal;font-style:normal;color:#9a9a9a;transform:scaleX(0.7941);">Rename...</div>
<div class="t" style="left:75.10px;top:243.00px;line-height:9.0px;font-family:'Liberation Sans', sans-serif;font-size:7.5px;font-weight:normal;font-style:normal;color:#9a9a9a;transform:scaleX(0.8286);">Remove All Terminated</div>
<div class="t" style="left:75.10px;top:254.30px;line-height:9.0px;font-family:'Liberation Sans', sans-serif;font-size:7.5px;font-weight:normal;font-style:normal;color:#1a1a1a;transform:scaleX(0.8001);">Relaunch</div>
<div class="t" style="left:75.10px;top:265.60px;line-height:9.0px;font-family:'Liberation Sans', sans-serif;font-size:7.5px;font-weight:normal;font-style:normal;color:#1a1a1a;transform:scaleX(0.7901);">Edit pinInterrupt_CC26X2R1_LAUNCHXL_tirtos_ccs...</div>
<div class="t" style="left:75.10px;top:277.20px;line-height:9.0px;font-family:'Liberation Sans', sans-serif;font-size:7.5px;font-weight:normal;font-style:normal;color:#1a1a1a;transform:scaleX(0.8208);">Terminate and Remove</div>
<div class="t" style="left:75.10px;top:288.70px;line-height:9.0px;font-family:'Liberation Sans', sans-serif;font-size:7.5px;font-weight:normal;font-style:normal;color:#1a1a1a;transform:scaleX(0.8512);">Terminate/Disconnect All</div>
<div class="t" style="left:75.10px;top:303.60px;line-height:9.0px;font-family:'Liberation Sans', sans-serif;font-size:7.5px;font-weight:normal;font-style:normal;color:#9a9a9a;transform:scaleX(0.8118);">Properties</div>
<div style="left:73px;top:141.8px;width:201px;height:0.8px;background:#dcdcdc"></div>
<div style="left:73px;top:167.2px;width:201px;height:0.8px;background:#dcdcdc"></div>
<div style="left:73px;top:240.2px;width:201px;height:0.8px;background:#dcdcdc"></div>
<div style="left:73px;top:300.6px;width:201px;height:0.8px;background:#dcdcdc"></div>
<div style="left:58.8px;top:70.4px;width:11.1px;height:11.1px;background:#aad4f5"></div>
<svg style="left:60px;top:73.5px" width="9" height="5" viewBox="0 0 9 5"><path d="M0.5 2.5H8.5" stroke="#888" stroke-width="1"/><rect x="3" y="1" width="3" height="3" fill="#2a9a3a"/></svg>
<svg style="left:61px;top:172.8px" width="7" height="6" viewBox="0 0 7 6"><path d="M0.8 0.8L6.2 5.2M6.2 0.8L0.8 5.2" stroke="#e03030" stroke-width="1.7"/></svg>
<svg style="left:60.5px;top:245px" width="7" height="7" viewBox="0 0 7 7"><path d="M0.8 0.8L6.2 6.2M6.2 0.8L0.8 6.2" stroke="#c8c8c8" stroke-width="1.3"/><circle cx="3.5" cy="3.5" r="1.5" fill="#ccc"/></svg>
<svg style="left:60px;top:255.5px" width="8.5" height="8.5" viewBox="0 0 8.5 8.5"><circle cx="3" cy="3" r="2.8" fill="#2a9a3a"/><path d="M2.2 1.5L4.2 3L2.2 4.5Z" fill="#fff"/><circle cx="6" cy="6" r="2" fill="#e8c050"/></svg>
<svg style="left:60px;top:267px" width="8" height="7.5" viewBox="0 0 8 7.5"><circle cx="4" cy="3.8" r="3.3" fill="#777"/><circle cx="4" cy="3.8" r="1.3" fill="#eee"/></svg>
<svg style="left:60px;top:278.5px" width="8.5" height="8" viewBox="0 0 8.5 8"><rect x="0.5" y="0.5" width="4.5" height="4" fill="#e04040"/><path d="M4.5 4.5L8 7.5M8 4.5L4.5 7.5" stroke="#555" stroke-width="1.1"/></svg>
<svg style="left:60px;top:290px" width="8.5" height="8" viewBox="0 0 8.5 8"><rect x="0.5" y="0.5" width="5.5" height="5" fill="#f08080"/><rect x="2.5" y="2.5" width="5.5" height="5" fill="#e02020"/></svg>
<div style="left:58px;top:126.1px;width:191px;height:14.8px;border:4px solid #a00000;border-radius:2.5px"></div>
<div style="left:11px;top:62px;width:306px;height:14.5px;border:3.8px solid #a00000;border-radius:2px"></div>
<div style="left:976px;top:18px;width:28.5px;height:24.7px;border:4px solid #a00000;border-radius:2.5px"></div>
</body></html>
